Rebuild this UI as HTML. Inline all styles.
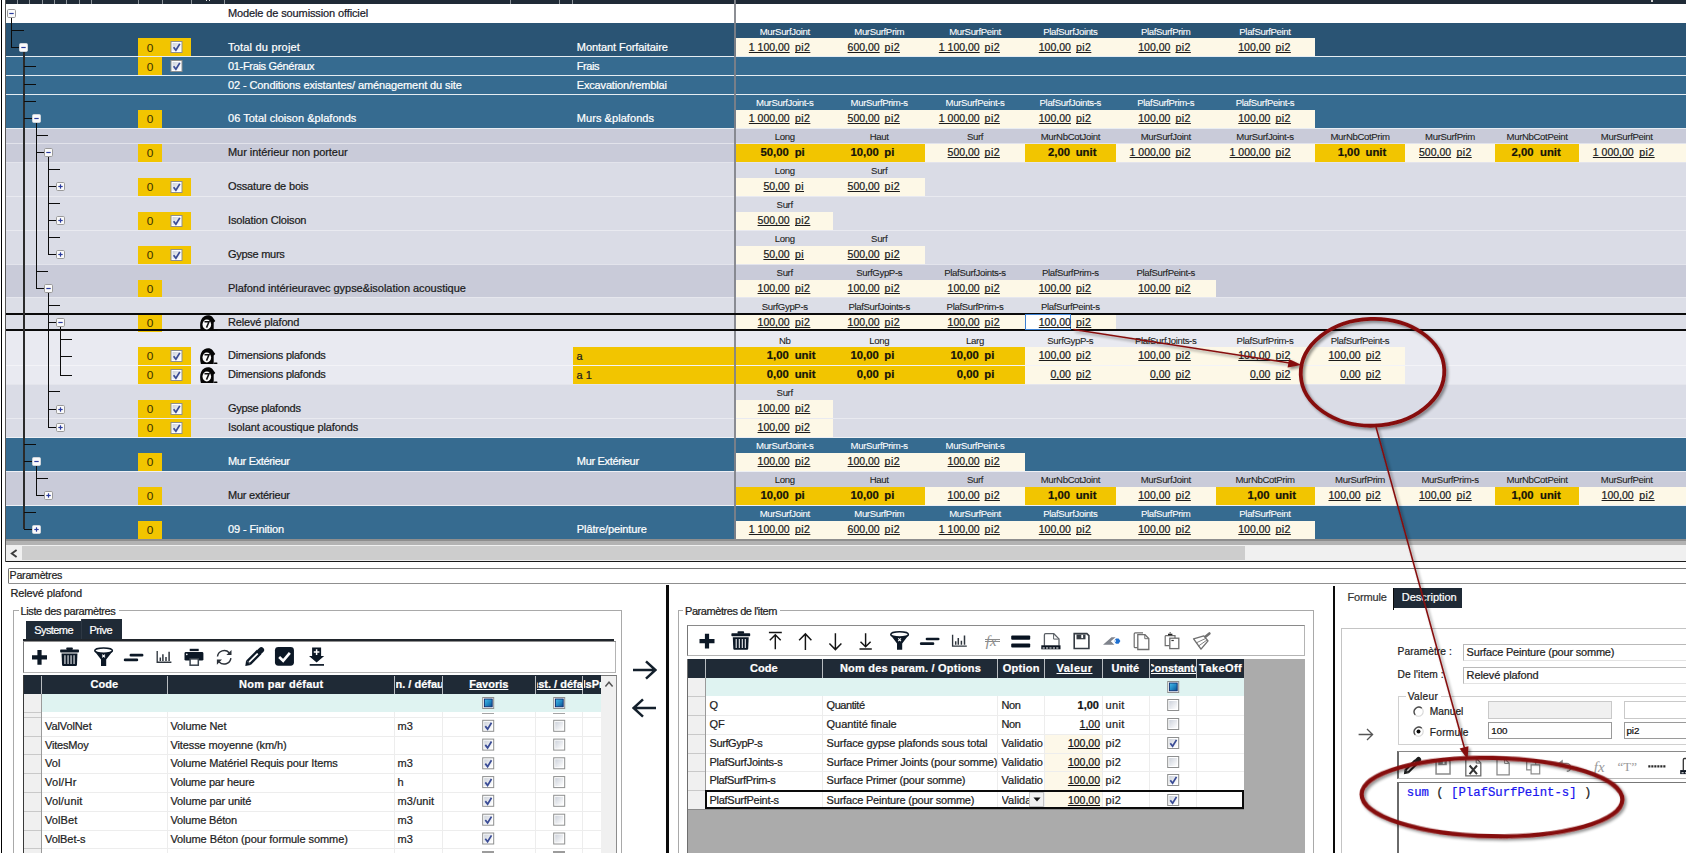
<!DOCTYPE html>
<html lang="fr"><head><meta charset="utf-8"><title>Paramètres</title>
<style>
html,body{margin:0;padding:0;background:#fff;}
body{width:1686px;height:853px;position:relative;overflow:hidden;font-family:"Liberation Sans",sans-serif;}
#root{position:absolute;left:0;top:0;width:1686px;height:853px;overflow:hidden;}
#root div,#root span,#root svg{position:absolute;}
.t{white-space:pre;line-height:1;text-decoration-skip-ink:none;-webkit-text-stroke:0.22px;}
</style></head>
<body><div id="root">
<div style="left:0px;top:0px;width:1686px;height:853px;background:#ffffff;"></div>
<div style="left:1px;top:0px;width:1.3px;height:853px;background:#000;"></div>
<div style="left:5.3px;top:0px;width:1680.7px;height:4px;background:#1f2a36;"></div>
<div style="left:17px;top:0px;width:1.2px;height:3.6px;background:#8d949b;"></div>
<div style="left:29.2px;top:0px;width:1.2px;height:3.6px;background:#8d949b;"></div>
<div style="left:42px;top:0px;width:1.2px;height:3.6px;background:#8d949b;"></div>
<div style="left:54px;top:0px;width:1.2px;height:3.6px;background:#8d949b;"></div>
<div style="left:66.3px;top:0px;width:1.2px;height:3.6px;background:#8d949b;"></div>
<div style="left:78.6px;top:0px;width:1.2px;height:3.6px;background:#8d949b;"></div>
<div style="left:90.7px;top:0px;width:1.2px;height:3.6px;background:#8d949b;"></div>
<div style="left:137.6px;top:0px;width:1.2px;height:3.6px;background:#8d949b;"></div>
<div style="left:161.6px;top:0px;width:1.2px;height:3.6px;background:#8d949b;"></div>
<div style="left:190.5px;top:0px;width:1.2px;height:3.6px;background:#8d949b;"></div>
<div style="left:224.2px;top:0px;width:1.2px;height:3.6px;background:#8d949b;"></div>
<div style="left:509.5px;top:0px;width:1.2px;height:3.6px;background:#8d949b;"></div>
<div style="left:559px;top:0px;width:1.2px;height:3.6px;background:#8d949b;"></div>
<div style="left:572px;top:0px;width:1.2px;height:3.6px;background:#8d949b;"></div>
<div style="left:733.6px;top:0px;width:1.2px;height:3.6px;background:#8d949b;"></div>
<div style="left:205.5px;top:0px;width:1.2px;height:1.2px;background:#e8e8e8;"></div>
<div style="left:208.5px;top:0px;width:1.2px;height:1.2px;background:#e8e8e8;"></div>
<div style="left:1651px;top:0px;width:1.5px;height:1.5px;background:#d0d0d0;"></div>
<div style="left:5.3px;top:4px;width:1680.7px;height:19px;background:#ffffff;"></div>
<div style="left:5.3px;top:23px;width:1680.7px;height:34px;background:#2a5474;"></div>
<div style="left:5.3px;top:56px;width:1680.7px;height:1px;background:#e6edf2;"></div>
<div style="left:5.3px;top:57px;width:1680.7px;height:19px;background:#366b90;"></div>
<div style="left:5.3px;top:75px;width:1680.7px;height:1px;background:#e6edf2;"></div>
<div style="left:5.3px;top:76px;width:1680.7px;height:19px;background:#366b90;"></div>
<div style="left:5.3px;top:94px;width:1680.7px;height:1px;background:#e6edf2;"></div>
<div style="left:5.3px;top:95px;width:1680.7px;height:34px;background:#366b90;"></div>
<div style="left:5.3px;top:128px;width:1680.7px;height:1px;background:#e9edf2;"></div>
<div style="left:5.3px;top:129px;width:1680.7px;height:34px;background:#c9cbd9;"></div>
<div style="left:5.3px;top:162px;width:1680.7px;height:1px;background:#e3e4ec;"></div>
<div style="left:5.3px;top:163px;width:1680.7px;height:34px;background:#dadce6;"></div>
<div style="left:5.3px;top:196px;width:1680.7px;height:1px;background:#e9eaf0;"></div>
<div style="left:5.3px;top:197px;width:1680.7px;height:34px;background:#dadce6;"></div>
<div style="left:5.3px;top:230px;width:1680.7px;height:1px;background:#e9eaf0;"></div>
<div style="left:5.3px;top:231px;width:1680.7px;height:34px;background:#dadce6;"></div>
<div style="left:5.3px;top:264px;width:1680.7px;height:1px;background:#e3e4ec;"></div>
<div style="left:5.3px;top:265px;width:1680.7px;height:32px;background:#c9cbd9;"></div>
<div style="left:5.3px;top:297px;width:1680.7px;height:34px;background:#dcdee7;"></div>
<div style="left:5.3px;top:331px;width:1680.7px;height:35px;background:#e9eaf1;"></div>
<div style="left:5.3px;top:365px;width:1680.7px;height:1px;background:#f3f3f7;"></div>
<div style="left:5.3px;top:366px;width:1680.7px;height:19px;background:#e9eaf1;"></div>
<div style="left:5.3px;top:384px;width:1680.7px;height:1px;background:#e4e5ec;"></div>
<div style="left:5.3px;top:385px;width:1680.7px;height:34px;background:#dadce6;"></div>
<div style="left:5.3px;top:418px;width:1680.7px;height:1px;background:#e9eaf0;"></div>
<div style="left:5.3px;top:419px;width:1680.7px;height:19px;background:#dadce6;"></div>
<div style="left:5.3px;top:437px;width:1680.7px;height:1px;background:#eef0f5;"></div>
<div style="left:5.3px;top:438px;width:1680.7px;height:34px;background:#366b90;"></div>
<div style="left:5.3px;top:471px;width:1680.7px;height:1px;background:#eef0f5;"></div>
<div style="left:5.3px;top:472px;width:1680.7px;height:34px;background:#c9cbd9;"></div>
<div style="left:5.3px;top:505px;width:1680.7px;height:1px;background:#eef0f5;"></div>
<div style="left:5.3px;top:506px;width:1680.7px;height:32.6px;background:#366b90;"></div>
<div style="left:5.3px;top:143px;width:1680.7px;height:1px;background:#e2e3eb;"></div>
<div style="left:5.3px;top:297px;width:1680.7px;height:1px;background:#e6e7ee;"></div>
<div style="left:735.8px;top:38px;width:97.4px;height:18px;background:#fdf8e7;"></div>
<span class="t" style="top:27px;font-size:9.6px;color:#ffffff;left:784.7px;transform:translateX(-50%);letter-spacing:-0.36px;-webkit-text-stroke:0.08px;">MurSurfJoint</span>
<span class="t" style="top:42px;font-size:10.5px;color:#1b1b1b;right:896.3px;text-decoration:underline;">1 100,00</span>
<span class="t" style="top:42px;font-size:10.6px;color:#1b1b1b;left:795px;text-decoration:underline;letter-spacing:0.4px;">pi2</span>
<div style="left:833.2px;top:38px;width:91.8px;height:18px;background:#fdf8e7;"></div>
<span class="t" style="top:27px;font-size:9.6px;color:#ffffff;left:879.2px;transform:translateX(-50%);letter-spacing:-0.36px;-webkit-text-stroke:0.08px;">MurSurfPrim</span>
<span class="t" style="top:42px;font-size:10.5px;color:#1b1b1b;right:806.3px;text-decoration:underline;">600,00</span>
<span class="t" style="top:42px;font-size:10.6px;color:#1b1b1b;left:884.6px;text-decoration:underline;letter-spacing:0.4px;">pi2</span>
<div style="left:925px;top:38px;width:100px;height:18px;background:#fdf8e7;"></div>
<span class="t" style="top:27px;font-size:9.6px;color:#ffffff;left:975px;transform:translateX(-50%);letter-spacing:-0.36px;-webkit-text-stroke:0.08px;">MurSurfPeint</span>
<span class="t" style="top:42px;font-size:10.5px;color:#1b1b1b;right:706.3px;text-decoration:underline;">1 100,00</span>
<span class="t" style="top:42px;font-size:10.6px;color:#1b1b1b;left:984.6px;text-decoration:underline;letter-spacing:0.4px;">pi2</span>
<div style="left:1025px;top:38px;width:91.3px;height:18px;background:#fdf8e7;"></div>
<span class="t" style="top:27px;font-size:9.6px;color:#ffffff;left:1070.3px;transform:translateX(-50%);letter-spacing:-0.36px;-webkit-text-stroke:0.08px;">PlafSurfJoints</span>
<span class="t" style="top:42px;font-size:10.5px;color:#1b1b1b;right:615.1px;text-decoration:underline;">100,00</span>
<span class="t" style="top:42px;font-size:10.6px;color:#1b1b1b;left:1076px;text-decoration:underline;letter-spacing:0.4px;">pi2</span>
<div style="left:1116.3px;top:38px;width:99.3px;height:18px;background:#fdf8e7;"></div>
<span class="t" style="top:27px;font-size:9.6px;color:#ffffff;left:1165.7px;transform:translateX(-50%);letter-spacing:-0.36px;-webkit-text-stroke:0.08px;">PlafSurfPrim</span>
<span class="t" style="top:42px;font-size:10.5px;color:#1b1b1b;right:515.6px;text-decoration:underline;">100,00</span>
<span class="t" style="top:42px;font-size:10.6px;color:#1b1b1b;left:1175.5px;text-decoration:underline;letter-spacing:0.4px;">pi2</span>
<div style="left:1215.6px;top:38px;width:99.4px;height:18px;background:#fdf8e7;"></div>
<span class="t" style="top:27px;font-size:9.6px;color:#ffffff;left:1265px;transform:translateX(-50%);letter-spacing:-0.36px;-webkit-text-stroke:0.08px;">PlafSurfPeint</span>
<span class="t" style="top:42px;font-size:10.5px;color:#1b1b1b;right:415.6px;text-decoration:underline;">100,00</span>
<span class="t" style="top:42px;font-size:10.6px;color:#1b1b1b;left:1275.5px;text-decoration:underline;letter-spacing:0.4px;">pi2</span>
<div style="left:735.8px;top:110px;width:97.4px;height:18px;background:#fdf8e7;"></div>
<span class="t" style="top:98px;font-size:9.6px;color:#ffffff;left:784.7px;transform:translateX(-50%);letter-spacing:-0.36px;-webkit-text-stroke:0.08px;">MurSurfJoint-s</span>
<span class="t" style="top:113px;font-size:10.5px;color:#1b1b1b;right:896.3px;text-decoration:underline;">1 000,00</span>
<span class="t" style="top:113px;font-size:10.6px;color:#1b1b1b;left:795px;text-decoration:underline;letter-spacing:0.4px;">pi2</span>
<div style="left:833.2px;top:110px;width:91.8px;height:18px;background:#fdf8e7;"></div>
<span class="t" style="top:98px;font-size:9.6px;color:#ffffff;left:879.2px;transform:translateX(-50%);letter-spacing:-0.36px;-webkit-text-stroke:0.08px;">MurSurfPrim-s</span>
<span class="t" style="top:113px;font-size:10.5px;color:#1b1b1b;right:806.3px;text-decoration:underline;">500,00</span>
<span class="t" style="top:113px;font-size:10.6px;color:#1b1b1b;left:884.6px;text-decoration:underline;letter-spacing:0.4px;">pi2</span>
<div style="left:925px;top:110px;width:100px;height:18px;background:#fdf8e7;"></div>
<span class="t" style="top:98px;font-size:9.6px;color:#ffffff;left:975px;transform:translateX(-50%);letter-spacing:-0.36px;-webkit-text-stroke:0.08px;">MurSurfPeint-s</span>
<span class="t" style="top:113px;font-size:10.5px;color:#1b1b1b;right:706.3px;text-decoration:underline;">1 000,00</span>
<span class="t" style="top:113px;font-size:10.6px;color:#1b1b1b;left:984.6px;text-decoration:underline;letter-spacing:0.4px;">pi2</span>
<div style="left:1025px;top:110px;width:91.3px;height:18px;background:#fdf8e7;"></div>
<span class="t" style="top:98px;font-size:9.6px;color:#ffffff;left:1070.3px;transform:translateX(-50%);letter-spacing:-0.36px;-webkit-text-stroke:0.08px;">PlafSurfJoints-s</span>
<span class="t" style="top:113px;font-size:10.5px;color:#1b1b1b;right:615.1px;text-decoration:underline;">100,00</span>
<span class="t" style="top:113px;font-size:10.6px;color:#1b1b1b;left:1076px;text-decoration:underline;letter-spacing:0.4px;">pi2</span>
<div style="left:1116.3px;top:110px;width:99.3px;height:18px;background:#fdf8e7;"></div>
<span class="t" style="top:98px;font-size:9.6px;color:#ffffff;left:1165.7px;transform:translateX(-50%);letter-spacing:-0.36px;-webkit-text-stroke:0.08px;">PlafSurfPrim-s</span>
<span class="t" style="top:113px;font-size:10.5px;color:#1b1b1b;right:515.6px;text-decoration:underline;">100,00</span>
<span class="t" style="top:113px;font-size:10.6px;color:#1b1b1b;left:1175.5px;text-decoration:underline;letter-spacing:0.4px;">pi2</span>
<div style="left:1215.6px;top:110px;width:99.4px;height:18px;background:#fdf8e7;"></div>
<span class="t" style="top:98px;font-size:9.6px;color:#ffffff;left:1265px;transform:translateX(-50%);letter-spacing:-0.36px;-webkit-text-stroke:0.08px;">PlafSurfPeint-s</span>
<span class="t" style="top:113px;font-size:10.5px;color:#1b1b1b;right:415.6px;text-decoration:underline;">100,00</span>
<span class="t" style="top:113px;font-size:10.6px;color:#1b1b1b;left:1275.5px;text-decoration:underline;letter-spacing:0.4px;">pi2</span>
<div style="left:735.8px;top:144px;width:97.4px;height:18px;background:#f2c500;"></div>
<span class="t" style="top:132px;font-size:9.6px;color:#222;left:784.7px;transform:translateX(-50%);letter-spacing:-0.36px;-webkit-text-stroke:0.08px;">Long</span>
<span class="t" style="top:147px;font-size:11.3px;color:#15130a;right:897.2px;font-weight:bold;">50,00</span>
<span class="t" style="top:147px;font-size:11.3px;color:#15130a;left:794.7px;font-weight:bold;">pi</span>
<div style="left:833.2px;top:144px;width:91.8px;height:18px;background:#f2c500;"></div>
<span class="t" style="top:132px;font-size:9.6px;color:#222;left:879.2px;transform:translateX(-50%);letter-spacing:-0.36px;-webkit-text-stroke:0.08px;">Haut</span>
<span class="t" style="top:147px;font-size:11.3px;color:#15130a;right:807.2px;font-weight:bold;">10,00</span>
<span class="t" style="top:147px;font-size:11.3px;color:#15130a;left:884.3px;font-weight:bold;">pi</span>
<div style="left:925px;top:144px;width:100px;height:18px;background:#fdf8e7;"></div>
<span class="t" style="top:132px;font-size:9.6px;color:#222;left:975px;transform:translateX(-50%);letter-spacing:-0.36px;-webkit-text-stroke:0.08px;">Surf</span>
<span class="t" style="top:147px;font-size:10.5px;color:#1b1b1b;right:706.3px;text-decoration:underline;">500,00</span>
<span class="t" style="top:147px;font-size:10.6px;color:#1b1b1b;left:984.6px;text-decoration:underline;letter-spacing:0.4px;">pi2</span>
<div style="left:1025px;top:144px;width:91.3px;height:18px;background:#f2c500;"></div>
<span class="t" style="top:132px;font-size:9.6px;color:#222;left:1070.3px;transform:translateX(-50%);letter-spacing:-0.36px;-webkit-text-stroke:0.08px;">MurNbCotJoint</span>
<span class="t" style="top:147px;font-size:11.3px;color:#15130a;right:616px;font-weight:bold;">2,00</span>
<span class="t" style="top:147px;font-size:11.3px;color:#15130a;left:1075.7px;font-weight:bold;">unit</span>
<div style="left:1116.3px;top:144px;width:99.3px;height:18px;background:#fdf8e7;"></div>
<span class="t" style="top:132px;font-size:9.6px;color:#222;left:1165.7px;transform:translateX(-50%);letter-spacing:-0.36px;-webkit-text-stroke:0.08px;">MurSurfJoint</span>
<span class="t" style="top:147px;font-size:10.5px;color:#1b1b1b;right:515.6px;text-decoration:underline;">1 000,00</span>
<span class="t" style="top:147px;font-size:10.6px;color:#1b1b1b;left:1175.5px;text-decoration:underline;letter-spacing:0.4px;">pi2</span>
<div style="left:1215.6px;top:144px;width:99.4px;height:18px;background:#fdf8e7;"></div>
<span class="t" style="top:132px;font-size:9.6px;color:#222;left:1265px;transform:translateX(-50%);letter-spacing:-0.36px;-webkit-text-stroke:0.08px;">MurSurfJoint-s</span>
<span class="t" style="top:147px;font-size:10.5px;color:#1b1b1b;right:415.6px;text-decoration:underline;">1 000,00</span>
<span class="t" style="top:147px;font-size:10.6px;color:#1b1b1b;left:1275.5px;text-decoration:underline;letter-spacing:0.4px;">pi2</span>
<div style="left:1315px;top:144px;width:90.2px;height:18px;background:#f2c500;"></div>
<span class="t" style="top:132px;font-size:9.6px;color:#222;left:1360px;transform:translateX(-50%);letter-spacing:-0.36px;-webkit-text-stroke:0.08px;">MurNbCotPrim</span>
<span class="t" style="top:147px;font-size:11.3px;color:#15130a;right:326.3px;font-weight:bold;">1,00</span>
<span class="t" style="top:147px;font-size:11.3px;color:#15130a;left:1365.5px;font-weight:bold;">unit</span>
<div style="left:1405.2px;top:144px;width:89.8px;height:18px;background:#fdf8e7;"></div>
<span class="t" style="top:132px;font-size:9.6px;color:#222;left:1450px;transform:translateX(-50%);letter-spacing:-0.36px;-webkit-text-stroke:0.08px;">MurSurfPrim</span>
<span class="t" style="top:147px;font-size:10.5px;color:#1b1b1b;right:234.9px;text-decoration:underline;">500,00</span>
<span class="t" style="top:147px;font-size:10.6px;color:#1b1b1b;left:1456.4px;text-decoration:underline;letter-spacing:0.4px;">pi2</span>
<div style="left:1495px;top:144px;width:84.4px;height:18px;background:#f2c500;"></div>
<span class="t" style="top:132px;font-size:9.6px;color:#222;left:1537px;transform:translateX(-50%);letter-spacing:-0.36px;-webkit-text-stroke:0.08px;">MurNbCotPeint</span>
<span class="t" style="top:147px;font-size:11.3px;color:#15130a;right:152.5px;font-weight:bold;">2,00</span>
<span class="t" style="top:147px;font-size:11.3px;color:#15130a;left:1540px;font-weight:bold;">unit</span>
<div style="left:1579.4px;top:144px;width:106.6px;height:18px;background:#fdf8e7;"></div>
<span class="t" style="top:132px;font-size:9.6px;color:#222;left:1626.7px;transform:translateX(-50%);letter-spacing:-0.36px;-webkit-text-stroke:0.08px;">MurSurfPeint</span>
<span class="t" style="top:147px;font-size:10.5px;color:#1b1b1b;right:52.3px;text-decoration:underline;">1 000,00</span>
<span class="t" style="top:147px;font-size:10.6px;color:#1b1b1b;left:1639.3px;text-decoration:underline;letter-spacing:0.4px;">pi2</span>
<div style="left:735.8px;top:178px;width:97.4px;height:18px;background:#fdf8e7;"></div>
<span class="t" style="top:166px;font-size:9.6px;color:#222;left:784.7px;transform:translateX(-50%);letter-spacing:-0.36px;-webkit-text-stroke:0.08px;">Long</span>
<span class="t" style="top:181px;font-size:10.5px;color:#1b1b1b;right:896.3px;text-decoration:underline;">50,00</span>
<span class="t" style="top:181px;font-size:10.6px;color:#1b1b1b;left:795px;text-decoration:underline;letter-spacing:0.4px;">pi</span>
<div style="left:833.2px;top:178px;width:91.8px;height:18px;background:#fdf8e7;"></div>
<span class="t" style="top:166px;font-size:9.6px;color:#222;left:879.2px;transform:translateX(-50%);letter-spacing:-0.36px;-webkit-text-stroke:0.08px;">Surf</span>
<span class="t" style="top:181px;font-size:10.5px;color:#1b1b1b;right:806.3px;text-decoration:underline;">500,00</span>
<span class="t" style="top:181px;font-size:10.6px;color:#1b1b1b;left:884.6px;text-decoration:underline;letter-spacing:0.4px;">pi2</span>
<div style="left:735.8px;top:212px;width:97.4px;height:18px;background:#fdf8e7;"></div>
<span class="t" style="top:200px;font-size:9.6px;color:#222;left:784.7px;transform:translateX(-50%);letter-spacing:-0.36px;-webkit-text-stroke:0.08px;">Surf</span>
<span class="t" style="top:215px;font-size:10.5px;color:#1b1b1b;right:896.3px;text-decoration:underline;">500,00</span>
<span class="t" style="top:215px;font-size:10.6px;color:#1b1b1b;left:795px;text-decoration:underline;letter-spacing:0.4px;">pi2</span>
<div style="left:735.8px;top:246px;width:97.4px;height:18px;background:#fdf8e7;"></div>
<span class="t" style="top:234px;font-size:9.6px;color:#222;left:784.7px;transform:translateX(-50%);letter-spacing:-0.36px;-webkit-text-stroke:0.08px;">Long</span>
<span class="t" style="top:249px;font-size:10.5px;color:#1b1b1b;right:896.3px;text-decoration:underline;">50,00</span>
<span class="t" style="top:249px;font-size:10.6px;color:#1b1b1b;left:795px;text-decoration:underline;letter-spacing:0.4px;">pi</span>
<div style="left:833.2px;top:246px;width:91.8px;height:18px;background:#fdf8e7;"></div>
<span class="t" style="top:234px;font-size:9.6px;color:#222;left:879.2px;transform:translateX(-50%);letter-spacing:-0.36px;-webkit-text-stroke:0.08px;">Surf</span>
<span class="t" style="top:249px;font-size:10.5px;color:#1b1b1b;right:806.3px;text-decoration:underline;">500,00</span>
<span class="t" style="top:249px;font-size:10.6px;color:#1b1b1b;left:884.6px;text-decoration:underline;letter-spacing:0.4px;">pi2</span>
<div style="left:735.8px;top:280px;width:97.4px;height:17px;background:#fdf8e7;"></div>
<span class="t" style="top:268px;font-size:9.6px;color:#222;left:784.7px;transform:translateX(-50%);letter-spacing:-0.36px;-webkit-text-stroke:0.08px;">Surf</span>
<span class="t" style="top:283px;font-size:10.5px;color:#1b1b1b;right:896.3px;text-decoration:underline;">100,00</span>
<span class="t" style="top:283px;font-size:10.6px;color:#1b1b1b;left:795px;text-decoration:underline;letter-spacing:0.4px;">pi2</span>
<div style="left:833.2px;top:280px;width:91.8px;height:17px;background:#fdf8e7;"></div>
<span class="t" style="top:268px;font-size:9.6px;color:#222;left:879.2px;transform:translateX(-50%);letter-spacing:-0.36px;-webkit-text-stroke:0.08px;">SurfGypP-s</span>
<span class="t" style="top:283px;font-size:10.5px;color:#1b1b1b;right:806.3px;text-decoration:underline;">100,00</span>
<span class="t" style="top:283px;font-size:10.6px;color:#1b1b1b;left:884.6px;text-decoration:underline;letter-spacing:0.4px;">pi2</span>
<div style="left:925px;top:280px;width:100px;height:17px;background:#fdf8e7;"></div>
<span class="t" style="top:268px;font-size:9.6px;color:#222;left:975px;transform:translateX(-50%);letter-spacing:-0.36px;-webkit-text-stroke:0.08px;">PlafSurfJoints-s</span>
<span class="t" style="top:283px;font-size:10.5px;color:#1b1b1b;right:706.3px;text-decoration:underline;">100,00</span>
<span class="t" style="top:283px;font-size:10.6px;color:#1b1b1b;left:984.6px;text-decoration:underline;letter-spacing:0.4px;">pi2</span>
<div style="left:1025px;top:280px;width:91.3px;height:17px;background:#fdf8e7;"></div>
<span class="t" style="top:268px;font-size:9.6px;color:#222;left:1070.3px;transform:translateX(-50%);letter-spacing:-0.36px;-webkit-text-stroke:0.08px;">PlafSurfPrim-s</span>
<span class="t" style="top:283px;font-size:10.5px;color:#1b1b1b;right:615.1px;text-decoration:underline;">100,00</span>
<span class="t" style="top:283px;font-size:10.6px;color:#1b1b1b;left:1076px;text-decoration:underline;letter-spacing:0.4px;">pi2</span>
<div style="left:1116.3px;top:280px;width:99.3px;height:17px;background:#fdf8e7;"></div>
<span class="t" style="top:268px;font-size:9.6px;color:#222;left:1165.7px;transform:translateX(-50%);letter-spacing:-0.36px;-webkit-text-stroke:0.08px;">PlafSurfPeint-s</span>
<span class="t" style="top:283px;font-size:10.5px;color:#1b1b1b;right:515.6px;text-decoration:underline;">100,00</span>
<span class="t" style="top:283px;font-size:10.6px;color:#1b1b1b;left:1175.5px;text-decoration:underline;letter-spacing:0.4px;">pi2</span>
<div style="left:735.8px;top:315px;width:97.4px;height:15px;background:#fdf8e7;"></div>
<span class="t" style="top:302px;font-size:9.6px;color:#222;left:784.7px;transform:translateX(-50%);letter-spacing:-0.36px;-webkit-text-stroke:0.08px;">SurfGypP-s</span>
<span class="t" style="top:317px;font-size:10.5px;color:#1b1b1b;right:896.3px;text-decoration:underline;">100,00</span>
<span class="t" style="top:317px;font-size:10.6px;color:#1b1b1b;left:795px;text-decoration:underline;letter-spacing:0.4px;">pi2</span>
<div style="left:833.2px;top:315px;width:91.8px;height:15px;background:#fdf8e7;"></div>
<span class="t" style="top:302px;font-size:9.6px;color:#222;left:879.2px;transform:translateX(-50%);letter-spacing:-0.36px;-webkit-text-stroke:0.08px;">PlafSurfJoints-s</span>
<span class="t" style="top:317px;font-size:10.5px;color:#1b1b1b;right:806.3px;text-decoration:underline;">100,00</span>
<span class="t" style="top:317px;font-size:10.6px;color:#1b1b1b;left:884.6px;text-decoration:underline;letter-spacing:0.4px;">pi2</span>
<div style="left:925px;top:315px;width:100px;height:15px;background:#fdf8e7;"></div>
<span class="t" style="top:302px;font-size:9.6px;color:#222;left:975px;transform:translateX(-50%);letter-spacing:-0.36px;-webkit-text-stroke:0.08px;">PlafSurfPrim-s</span>
<span class="t" style="top:317px;font-size:10.5px;color:#1b1b1b;right:706.3px;text-decoration:underline;">100,00</span>
<span class="t" style="top:317px;font-size:10.6px;color:#1b1b1b;left:984.6px;text-decoration:underline;letter-spacing:0.4px;">pi2</span>
<div style="left:1025px;top:315px;width:91.3px;height:15px;background:#fdf8e7;"></div>
<span class="t" style="top:302px;font-size:9.6px;color:#222;left:1070.3px;transform:translateX(-50%);letter-spacing:-0.36px;-webkit-text-stroke:0.08px;">PlafSurfPeint-s</span>
<span class="t" style="top:317px;font-size:10.5px;color:#1b1b1b;right:615.1px;text-decoration:underline;">100,00</span>
<span class="t" style="top:317px;font-size:10.6px;color:#1b1b1b;left:1076px;text-decoration:underline;letter-spacing:0.4px;">pi2</span>
<div style="left:573.4px;top:347.2px;width:162.6px;height:17.8px;background:#f2c500;"></div>
<div style="left:573.4px;top:366.2px;width:162.6px;height:17.8px;background:#f2c500;"></div>
<div style="left:735.8px;top:347.2px;width:97.4px;height:17.8px;background:#f2c500;"></div>
<span class="t" style="top:336px;font-size:9.6px;color:#222;left:784.7px;transform:translateX(-50%);letter-spacing:-0.36px;-webkit-text-stroke:0.08px;">Nb</span>
<span class="t" style="top:350px;font-size:11.3px;color:#15130a;right:897.2px;font-weight:bold;">1,00</span>
<span class="t" style="top:350px;font-size:11.3px;color:#15130a;left:794.7px;font-weight:bold;">unit</span>
<div style="left:833.2px;top:347.2px;width:91.8px;height:17.8px;background:#f2c500;"></div>
<span class="t" style="top:336px;font-size:9.6px;color:#222;left:879.2px;transform:translateX(-50%);letter-spacing:-0.36px;-webkit-text-stroke:0.08px;">Long</span>
<span class="t" style="top:350px;font-size:11.3px;color:#15130a;right:807.2px;font-weight:bold;">10,00</span>
<span class="t" style="top:350px;font-size:11.3px;color:#15130a;left:884.3px;font-weight:bold;">pi</span>
<div style="left:925px;top:347.2px;width:100px;height:17.8px;background:#f2c500;"></div>
<span class="t" style="top:336px;font-size:9.6px;color:#222;left:975px;transform:translateX(-50%);letter-spacing:-0.36px;-webkit-text-stroke:0.08px;">Larg</span>
<span class="t" style="top:350px;font-size:11.3px;color:#15130a;right:707.2px;font-weight:bold;">10,00</span>
<span class="t" style="top:350px;font-size:11.3px;color:#15130a;left:984.3px;font-weight:bold;">pi</span>
<div style="left:1025px;top:347.2px;width:91.3px;height:17.8px;background:#fdf8e7;"></div>
<span class="t" style="top:336px;font-size:9.6px;color:#222;left:1070.3px;transform:translateX(-50%);letter-spacing:-0.36px;-webkit-text-stroke:0.08px;">SurfGypP-s</span>
<span class="t" style="top:350px;font-size:10.5px;color:#1b1b1b;right:615.1px;text-decoration:underline;">100,00</span>
<span class="t" style="top:350px;font-size:10.6px;color:#1b1b1b;left:1076px;text-decoration:underline;letter-spacing:0.4px;">pi2</span>
<div style="left:1116.3px;top:347.2px;width:99.3px;height:17.8px;background:#fdf8e7;"></div>
<span class="t" style="top:336px;font-size:9.6px;color:#222;left:1165.7px;transform:translateX(-50%);letter-spacing:-0.36px;-webkit-text-stroke:0.08px;">PlafSurfJoints-s</span>
<span class="t" style="top:350px;font-size:10.5px;color:#1b1b1b;right:515.6px;text-decoration:underline;">100,00</span>
<span class="t" style="top:350px;font-size:10.6px;color:#1b1b1b;left:1175.5px;text-decoration:underline;letter-spacing:0.4px;">pi2</span>
<div style="left:1215.6px;top:347.2px;width:99.4px;height:17.8px;background:#fdf8e7;"></div>
<span class="t" style="top:336px;font-size:9.6px;color:#222;left:1265px;transform:translateX(-50%);letter-spacing:-0.36px;-webkit-text-stroke:0.08px;">PlafSurfPrim-s</span>
<span class="t" style="top:350px;font-size:10.5px;color:#1b1b1b;right:415.6px;text-decoration:underline;">100,00</span>
<span class="t" style="top:350px;font-size:10.6px;color:#1b1b1b;left:1275.5px;text-decoration:underline;letter-spacing:0.4px;">pi2</span>
<div style="left:1315px;top:347.2px;width:90.2px;height:17.8px;background:#fdf8e7;"></div>
<span class="t" style="top:336px;font-size:9.6px;color:#222;left:1360px;transform:translateX(-50%);letter-spacing:-0.36px;-webkit-text-stroke:0.08px;">PlafSurfPeint-s</span>
<span class="t" style="top:350px;font-size:10.5px;color:#1b1b1b;right:325.4px;text-decoration:underline;">100,00</span>
<span class="t" style="top:350px;font-size:10.6px;color:#1b1b1b;left:1365.8px;text-decoration:underline;letter-spacing:0.4px;">pi2</span>
<div style="left:735.8px;top:366.2px;width:97.4px;height:17.8px;background:#f2c500;"></div>
<span class="t" style="top:369px;font-size:11.3px;color:#15130a;right:897.2px;font-weight:bold;">0,00</span>
<span class="t" style="top:369px;font-size:11.3px;color:#15130a;left:794.7px;font-weight:bold;">unit</span>
<div style="left:833.2px;top:366.2px;width:91.8px;height:17.8px;background:#f2c500;"></div>
<span class="t" style="top:369px;font-size:11.3px;color:#15130a;right:807.2px;font-weight:bold;">0,00</span>
<span class="t" style="top:369px;font-size:11.3px;color:#15130a;left:884.3px;font-weight:bold;">pi</span>
<div style="left:925px;top:366.2px;width:100px;height:17.8px;background:#f2c500;"></div>
<span class="t" style="top:369px;font-size:11.3px;color:#15130a;right:707.2px;font-weight:bold;">0,00</span>
<span class="t" style="top:369px;font-size:11.3px;color:#15130a;left:984.3px;font-weight:bold;">pi</span>
<div style="left:1025px;top:366.2px;width:91.3px;height:17.8px;background:#fdf8e7;"></div>
<span class="t" style="top:369px;font-size:10.5px;color:#1b1b1b;right:615.1px;text-decoration:underline;">0,00</span>
<span class="t" style="top:369px;font-size:10.6px;color:#1b1b1b;left:1076px;text-decoration:underline;letter-spacing:0.4px;">pi2</span>
<div style="left:1116.3px;top:366.2px;width:99.3px;height:17.8px;background:#fdf8e7;"></div>
<span class="t" style="top:369px;font-size:10.5px;color:#1b1b1b;right:515.6px;text-decoration:underline;">0,00</span>
<span class="t" style="top:369px;font-size:10.6px;color:#1b1b1b;left:1175.5px;text-decoration:underline;letter-spacing:0.4px;">pi2</span>
<div style="left:1215.6px;top:366.2px;width:99.4px;height:17.8px;background:#fdf8e7;"></div>
<span class="t" style="top:369px;font-size:10.5px;color:#1b1b1b;right:415.6px;text-decoration:underline;">0,00</span>
<span class="t" style="top:369px;font-size:10.6px;color:#1b1b1b;left:1275.5px;text-decoration:underline;letter-spacing:0.4px;">pi2</span>
<div style="left:1315px;top:366.2px;width:90.2px;height:17.8px;background:#fdf8e7;"></div>
<span class="t" style="top:369px;font-size:10.5px;color:#1b1b1b;right:325.4px;text-decoration:underline;">0,00</span>
<span class="t" style="top:369px;font-size:10.6px;color:#1b1b1b;left:1365.8px;text-decoration:underline;letter-spacing:0.4px;">pi2</span>
<div style="left:735.8px;top:400.2px;width:97.4px;height:17.8px;background:#fdf8e7;"></div>
<span class="t" style="top:388px;font-size:9.6px;color:#222;left:784.7px;transform:translateX(-50%);letter-spacing:-0.36px;-webkit-text-stroke:0.08px;">Surf</span>
<span class="t" style="top:403px;font-size:10.5px;color:#1b1b1b;right:896.3px;text-decoration:underline;">100,00</span>
<span class="t" style="top:403px;font-size:10.6px;color:#1b1b1b;left:795px;text-decoration:underline;letter-spacing:0.4px;">pi2</span>
<div style="left:735.8px;top:419.3px;width:97.4px;height:17.7px;background:#fdf8e7;"></div>
<span class="t" style="top:422px;font-size:10.5px;color:#1b1b1b;right:896.3px;text-decoration:underline;">100,00</span>
<span class="t" style="top:422px;font-size:10.6px;color:#1b1b1b;left:795px;text-decoration:underline;letter-spacing:0.4px;">pi2</span>
<div style="left:735.8px;top:453px;width:97.4px;height:18px;background:#fdf8e7;"></div>
<span class="t" style="top:441px;font-size:9.6px;color:#ffffff;left:784.7px;transform:translateX(-50%);letter-spacing:-0.36px;-webkit-text-stroke:0.08px;">MurSurfJoint-s</span>
<span class="t" style="top:456px;font-size:10.5px;color:#1b1b1b;right:896.3px;text-decoration:underline;">100,00</span>
<span class="t" style="top:456px;font-size:10.6px;color:#1b1b1b;left:795px;text-decoration:underline;letter-spacing:0.4px;">pi2</span>
<div style="left:833.2px;top:453px;width:91.8px;height:18px;background:#fdf8e7;"></div>
<span class="t" style="top:441px;font-size:9.6px;color:#ffffff;left:879.2px;transform:translateX(-50%);letter-spacing:-0.36px;-webkit-text-stroke:0.08px;">MurSurfPrim-s</span>
<span class="t" style="top:456px;font-size:10.5px;color:#1b1b1b;right:806.3px;text-decoration:underline;">100,00</span>
<span class="t" style="top:456px;font-size:10.6px;color:#1b1b1b;left:884.6px;text-decoration:underline;letter-spacing:0.4px;">pi2</span>
<div style="left:925px;top:453px;width:100px;height:18px;background:#fdf8e7;"></div>
<span class="t" style="top:441px;font-size:9.6px;color:#ffffff;left:975px;transform:translateX(-50%);letter-spacing:-0.36px;-webkit-text-stroke:0.08px;">MurSurfPeint-s</span>
<span class="t" style="top:456px;font-size:10.5px;color:#1b1b1b;right:706.3px;text-decoration:underline;">100,00</span>
<span class="t" style="top:456px;font-size:10.6px;color:#1b1b1b;left:984.6px;text-decoration:underline;letter-spacing:0.4px;">pi2</span>
<div style="left:735.8px;top:487px;width:97.4px;height:18px;background:#f2c500;"></div>
<span class="t" style="top:475px;font-size:9.6px;color:#222;left:784.7px;transform:translateX(-50%);letter-spacing:-0.36px;-webkit-text-stroke:0.08px;">Long</span>
<span class="t" style="top:490px;font-size:11.3px;color:#15130a;right:897.2px;font-weight:bold;">10,00</span>
<span class="t" style="top:490px;font-size:11.3px;color:#15130a;left:794.7px;font-weight:bold;">pi</span>
<div style="left:833.2px;top:487px;width:91.8px;height:18px;background:#f2c500;"></div>
<span class="t" style="top:475px;font-size:9.6px;color:#222;left:879.2px;transform:translateX(-50%);letter-spacing:-0.36px;-webkit-text-stroke:0.08px;">Haut</span>
<span class="t" style="top:490px;font-size:11.3px;color:#15130a;right:807.2px;font-weight:bold;">10,00</span>
<span class="t" style="top:490px;font-size:11.3px;color:#15130a;left:884.3px;font-weight:bold;">pi</span>
<div style="left:925px;top:487px;width:100px;height:18px;background:#fdf8e7;"></div>
<span class="t" style="top:475px;font-size:9.6px;color:#222;left:975px;transform:translateX(-50%);letter-spacing:-0.36px;-webkit-text-stroke:0.08px;">Surf</span>
<span class="t" style="top:490px;font-size:10.5px;color:#1b1b1b;right:706.3px;text-decoration:underline;">100,00</span>
<span class="t" style="top:490px;font-size:10.6px;color:#1b1b1b;left:984.6px;text-decoration:underline;letter-spacing:0.4px;">pi2</span>
<div style="left:1025px;top:487px;width:91.3px;height:18px;background:#f2c500;"></div>
<span class="t" style="top:475px;font-size:9.6px;color:#222;left:1070.3px;transform:translateX(-50%);letter-spacing:-0.36px;-webkit-text-stroke:0.08px;">MurNbCotJoint</span>
<span class="t" style="top:490px;font-size:11.3px;color:#15130a;right:616px;font-weight:bold;">1,00</span>
<span class="t" style="top:490px;font-size:11.3px;color:#15130a;left:1075.7px;font-weight:bold;">unit</span>
<div style="left:1116.3px;top:487px;width:99.3px;height:18px;background:#fdf8e7;"></div>
<span class="t" style="top:475px;font-size:9.6px;color:#222;left:1165.7px;transform:translateX(-50%);letter-spacing:-0.36px;-webkit-text-stroke:0.08px;">MurSurfJoint</span>
<span class="t" style="top:490px;font-size:10.5px;color:#1b1b1b;right:515.6px;text-decoration:underline;">100,00</span>
<span class="t" style="top:490px;font-size:10.6px;color:#1b1b1b;left:1175.5px;text-decoration:underline;letter-spacing:0.4px;">pi2</span>
<div style="left:1215.6px;top:487px;width:99.4px;height:18px;background:#f2c500;"></div>
<span class="t" style="top:475px;font-size:9.6px;color:#222;left:1265px;transform:translateX(-50%);letter-spacing:-0.36px;-webkit-text-stroke:0.08px;">MurNbCotPrim</span>
<span class="t" style="top:490px;font-size:11.3px;color:#15130a;right:416.5px;font-weight:bold;">1,00</span>
<span class="t" style="top:490px;font-size:11.3px;color:#15130a;left:1275.2px;font-weight:bold;">unit</span>
<div style="left:1315px;top:487px;width:90.2px;height:18px;background:#fdf8e7;"></div>
<span class="t" style="top:475px;font-size:9.6px;color:#222;left:1360px;transform:translateX(-50%);letter-spacing:-0.36px;-webkit-text-stroke:0.08px;">MurSurfPrim</span>
<span class="t" style="top:490px;font-size:10.5px;color:#1b1b1b;right:325.4px;text-decoration:underline;">100,00</span>
<span class="t" style="top:490px;font-size:10.6px;color:#1b1b1b;left:1365.8px;text-decoration:underline;letter-spacing:0.4px;">pi2</span>
<div style="left:1405.2px;top:487px;width:89.8px;height:18px;background:#fdf8e7;"></div>
<span class="t" style="top:475px;font-size:9.6px;color:#222;left:1450px;transform:translateX(-50%);letter-spacing:-0.36px;-webkit-text-stroke:0.08px;">MurSurfPrim-s</span>
<span class="t" style="top:490px;font-size:10.5px;color:#1b1b1b;right:234.9px;text-decoration:underline;">100,00</span>
<span class="t" style="top:490px;font-size:10.6px;color:#1b1b1b;left:1456.4px;text-decoration:underline;letter-spacing:0.4px;">pi2</span>
<div style="left:1495px;top:487px;width:84.4px;height:18px;background:#f2c500;"></div>
<span class="t" style="top:475px;font-size:9.6px;color:#222;left:1537px;transform:translateX(-50%);letter-spacing:-0.36px;-webkit-text-stroke:0.08px;">MurNbCotPeint</span>
<span class="t" style="top:490px;font-size:11.3px;color:#15130a;right:152.5px;font-weight:bold;">1,00</span>
<span class="t" style="top:490px;font-size:11.3px;color:#15130a;left:1540px;font-weight:bold;">unit</span>
<div style="left:1579.4px;top:487px;width:106.6px;height:18px;background:#fdf8e7;"></div>
<span class="t" style="top:475px;font-size:9.6px;color:#222;left:1626.7px;transform:translateX(-50%);letter-spacing:-0.36px;-webkit-text-stroke:0.08px;">MurSurfPeint</span>
<span class="t" style="top:490px;font-size:10.5px;color:#1b1b1b;right:52.3px;text-decoration:underline;">100,00</span>
<span class="t" style="top:490px;font-size:10.6px;color:#1b1b1b;left:1639.3px;text-decoration:underline;letter-spacing:0.4px;">pi2</span>
<div style="left:735.8px;top:520.6px;width:97.4px;height:18px;background:#fdf8e7;"></div>
<span class="t" style="top:509px;font-size:9.6px;color:#ffffff;left:784.7px;transform:translateX(-50%);letter-spacing:-0.36px;-webkit-text-stroke:0.08px;">MurSurfJoint</span>
<span class="t" style="top:524px;font-size:10.5px;color:#1b1b1b;right:896.3px;text-decoration:underline;">1 100,00</span>
<span class="t" style="top:524px;font-size:10.6px;color:#1b1b1b;left:795px;text-decoration:underline;letter-spacing:0.4px;">pi2</span>
<div style="left:833.2px;top:520.6px;width:91.8px;height:18px;background:#fdf8e7;"></div>
<span class="t" style="top:509px;font-size:9.6px;color:#ffffff;left:879.2px;transform:translateX(-50%);letter-spacing:-0.36px;-webkit-text-stroke:0.08px;">MurSurfPrim</span>
<span class="t" style="top:524px;font-size:10.5px;color:#1b1b1b;right:806.3px;text-decoration:underline;">600,00</span>
<span class="t" style="top:524px;font-size:10.6px;color:#1b1b1b;left:884.6px;text-decoration:underline;letter-spacing:0.4px;">pi2</span>
<div style="left:925px;top:520.6px;width:100px;height:18px;background:#fdf8e7;"></div>
<span class="t" style="top:509px;font-size:9.6px;color:#ffffff;left:975px;transform:translateX(-50%);letter-spacing:-0.36px;-webkit-text-stroke:0.08px;">MurSurfPeint</span>
<span class="t" style="top:524px;font-size:10.5px;color:#1b1b1b;right:706.3px;text-decoration:underline;">1 100,00</span>
<span class="t" style="top:524px;font-size:10.6px;color:#1b1b1b;left:984.6px;text-decoration:underline;letter-spacing:0.4px;">pi2</span>
<div style="left:1025px;top:520.6px;width:91.3px;height:18px;background:#fdf8e7;"></div>
<span class="t" style="top:509px;font-size:9.6px;color:#ffffff;left:1070.3px;transform:translateX(-50%);letter-spacing:-0.36px;-webkit-text-stroke:0.08px;">PlafSurfJoints</span>
<span class="t" style="top:524px;font-size:10.5px;color:#1b1b1b;right:615.1px;text-decoration:underline;">100,00</span>
<span class="t" style="top:524px;font-size:10.6px;color:#1b1b1b;left:1076px;text-decoration:underline;letter-spacing:0.4px;">pi2</span>
<div style="left:1116.3px;top:520.6px;width:99.3px;height:18px;background:#fdf8e7;"></div>
<span class="t" style="top:509px;font-size:9.6px;color:#ffffff;left:1165.7px;transform:translateX(-50%);letter-spacing:-0.36px;-webkit-text-stroke:0.08px;">PlafSurfPrim</span>
<span class="t" style="top:524px;font-size:10.5px;color:#1b1b1b;right:515.6px;text-decoration:underline;">100,00</span>
<span class="t" style="top:524px;font-size:10.6px;color:#1b1b1b;left:1175.5px;text-decoration:underline;letter-spacing:0.4px;">pi2</span>
<div style="left:1215.6px;top:520.6px;width:99.4px;height:18px;background:#fdf8e7;"></div>
<span class="t" style="top:509px;font-size:9.6px;color:#ffffff;left:1265px;transform:translateX(-50%);letter-spacing:-0.36px;-webkit-text-stroke:0.08px;">PlafSurfPeint</span>
<span class="t" style="top:524px;font-size:10.5px;color:#1b1b1b;right:415.6px;text-decoration:underline;">100,00</span>
<span class="t" style="top:524px;font-size:10.6px;color:#1b1b1b;left:1275.5px;text-decoration:underline;letter-spacing:0.4px;">pi2</span>
<div style="left:734.3px;top:0px;width:1.5px;height:538.6px;background:rgba(128,130,136,0.9);"></div>
<div style="left:5.3px;top:313px;width:1680.7px;height:2px;background:#0a0a0a;"></div>
<div style="left:5.3px;top:329px;width:1680.7px;height:2px;background:#0a0a0a;"></div>
<div style="left:1025.4px;top:314.2px;width:45.8px;height:16px;background:#ffffff;border:1px solid #3c7fd0;box-sizing:border-box;"></div>
<span class="t" style="top:317px;font-size:10.5px;color:#1b1b1b;right:615.1px;text-decoration:underline;">100,00</span>
<div style="left:138px;top:38px;width:53px;height:18px;background:#f2c500;"></div>
<span class="t" style="top:42px;font-size:10.6px;color:#3a3000;left:150px;transform:translateX(-50%);transform:translate(-50%,0.6px) scaleX(1.12);-webkit-text-stroke:0;">0</span>
<div style="left:138px;top:57px;width:24px;height:18px;background:#f2c500;"></div>
<span class="t" style="top:61px;font-size:10.6px;color:#3a3000;left:150px;transform:translateX(-50%);transform:translate(-50%,0.6px) scaleX(1.12);-webkit-text-stroke:0;">0</span>
<div style="left:138px;top:110px;width:24px;height:18px;background:#f2c500;"></div>
<span class="t" style="top:113px;font-size:10.6px;color:#3a3000;left:150px;transform:translateX(-50%);transform:translate(-50%,0.6px) scaleX(1.12);-webkit-text-stroke:0;">0</span>
<div style="left:138px;top:144px;width:24px;height:18px;background:#f2c500;"></div>
<span class="t" style="top:147px;font-size:10.6px;color:#3a3000;left:150px;transform:translateX(-50%);transform:translate(-50%,0.6px) scaleX(1.12);-webkit-text-stroke:0;">0</span>
<div style="left:138px;top:178px;width:53px;height:18px;background:#f2c500;"></div>
<span class="t" style="top:181px;font-size:10.6px;color:#3a3000;left:150px;transform:translateX(-50%);transform:translate(-50%,0.6px) scaleX(1.12);-webkit-text-stroke:0;">0</span>
<div style="left:138px;top:212px;width:53px;height:18px;background:#f2c500;"></div>
<span class="t" style="top:215px;font-size:10.6px;color:#3a3000;left:150px;transform:translateX(-50%);transform:translate(-50%,0.6px) scaleX(1.12);-webkit-text-stroke:0;">0</span>
<div style="left:138px;top:246px;width:53px;height:18px;background:#f2c500;"></div>
<span class="t" style="top:249px;font-size:10.6px;color:#3a3000;left:150px;transform:translateX(-50%);transform:translate(-50%,0.6px) scaleX(1.12);-webkit-text-stroke:0;">0</span>
<div style="left:138px;top:280px;width:24px;height:17px;background:#f2c500;"></div>
<span class="t" style="top:283px;font-size:10.6px;color:#3a3000;left:150px;transform:translateX(-50%);transform:translate(-50%,0.6px) scaleX(1.12);-webkit-text-stroke:0;">0</span>
<div style="left:138px;top:315px;width:24px;height:17px;background:#f2c500;"></div>
<span class="t" style="top:317px;font-size:10.6px;color:#3a3000;left:150px;transform:translateX(-50%);transform:translate(-50%,0.6px) scaleX(1.12);-webkit-text-stroke:0;">0</span>
<div style="left:138px;top:347.2px;width:53px;height:17.8px;background:#f2c500;"></div>
<span class="t" style="top:350px;font-size:10.6px;color:#3a3000;left:150px;transform:translateX(-50%);transform:translate(-50%,0.6px) scaleX(1.12);-webkit-text-stroke:0;">0</span>
<div style="left:138px;top:366.2px;width:53px;height:17.8px;background:#f2c500;"></div>
<span class="t" style="top:369px;font-size:10.6px;color:#3a3000;left:150px;transform:translateX(-50%);transform:translate(-50%,0.6px) scaleX(1.12);-webkit-text-stroke:0;">0</span>
<div style="left:138px;top:400.2px;width:53px;height:17.8px;background:#f2c500;"></div>
<span class="t" style="top:403px;font-size:10.6px;color:#3a3000;left:150px;transform:translateX(-50%);transform:translate(-50%,0.6px) scaleX(1.12);-webkit-text-stroke:0;">0</span>
<div style="left:138px;top:419.3px;width:53px;height:17.7px;background:#f2c500;"></div>
<span class="t" style="top:422px;font-size:10.6px;color:#3a3000;left:150px;transform:translateX(-50%);transform:translate(-50%,0.6px) scaleX(1.12);-webkit-text-stroke:0;">0</span>
<div style="left:138px;top:453px;width:24px;height:18px;background:#f2c500;"></div>
<span class="t" style="top:456px;font-size:10.6px;color:#3a3000;left:150px;transform:translateX(-50%);transform:translate(-50%,0.6px) scaleX(1.12);-webkit-text-stroke:0;">0</span>
<div style="left:138px;top:487px;width:24px;height:18px;background:#f2c500;"></div>
<span class="t" style="top:490px;font-size:10.6px;color:#3a3000;left:150px;transform:translateX(-50%);transform:translate(-50%,0.6px) scaleX(1.12);-webkit-text-stroke:0;">0</span>
<div style="left:138px;top:520.6px;width:24px;height:18px;background:#f2c500;"></div>
<span class="t" style="top:524px;font-size:10.6px;color:#3a3000;left:150px;transform:translateX(-50%);transform:translate(-50%,0.6px) scaleX(1.12);-webkit-text-stroke:0;">0</span>
<div style="left:138px;top:329px;width:24px;height:2px;background:#0a0a0a;"></div>
<span class="t" style="top:8px;font-size:11px;color:#1a1a2a;left:228px;letter-spacing:-0.12px;">Modele de soumission officiel</span>
<span class="t" style="top:42px;font-size:11px;color:#ffffff;left:228px;letter-spacing:0.2px;">Total du projet</span>
<span class="t" style="top:61px;font-size:11px;color:#ffffff;left:228px;letter-spacing:-0.32px;">01-Frais Généraux</span>
<span class="t" style="top:80px;font-size:11px;color:#ffffff;left:228px;letter-spacing:-0.1px;">02 - Conditions existantes/ aménagement du site</span>
<span class="t" style="top:113px;font-size:11px;color:#ffffff;left:228px;letter-spacing:0.03px;">06 Total cloison &amp;plafonds</span>
<span class="t" style="top:147px;font-size:11px;color:#1b1b1b;left:228px;letter-spacing:-0.06px;">Mur intérieur non porteur</span>
<span class="t" style="top:181px;font-size:11px;color:#1b1b1b;left:228px;letter-spacing:-0.17px;">Ossature de bois</span>
<span class="t" style="top:215px;font-size:11px;color:#1b1b1b;left:228px;letter-spacing:-0.14px;">Isolation Cloison</span>
<span class="t" style="top:249px;font-size:11px;color:#1b1b1b;left:228px;letter-spacing:-0.28px;">Gypse murs</span>
<span class="t" style="top:283px;font-size:11px;color:#1b1b1b;left:228px;letter-spacing:-0.04px;">Plafond intérieuravec gypse&amp;isolation acoustique</span>
<span class="t" style="top:317px;font-size:11px;color:#1b1b1b;left:228px;letter-spacing:-0.15px;">Relevé plafond</span>
<span class="t" style="top:350px;font-size:11px;color:#1b1b1b;left:228px;letter-spacing:-0.24px;">Dimensions plafonds</span>
<span class="t" style="top:369px;font-size:11px;color:#1b1b1b;left:228px;letter-spacing:-0.24px;">Dimensions plafonds</span>
<span class="t" style="top:403px;font-size:11px;color:#1b1b1b;left:228px;letter-spacing:-0.27px;">Gypse plafonds</span>
<span class="t" style="top:422px;font-size:11px;color:#1b1b1b;left:228px;letter-spacing:-0.12px;">Isolant acoustique plafonds</span>
<span class="t" style="top:456px;font-size:11px;color:#ffffff;left:228px;letter-spacing:-0.34px;">Mur Extérieur</span>
<span class="t" style="top:490px;font-size:11px;color:#1b1b1b;left:228px;letter-spacing:-0.24px;">Mur extérieur</span>
<span class="t" style="top:524px;font-size:11px;color:#ffffff;left:228px;letter-spacing:-0.11px;">09 - Finition</span>
<span class="t" style="top:42px;font-size:11px;color:#ffffff;left:576.8px;letter-spacing:-0.07px;">Montant Forfaitaire</span>
<span class="t" style="top:61px;font-size:11px;color:#ffffff;left:576.8px;letter-spacing:-0.46px;">Frais</span>
<span class="t" style="top:80px;font-size:11px;color:#ffffff;left:576.8px;letter-spacing:-0.17px;">Excavation/remblai</span>
<span class="t" style="top:113px;font-size:11px;color:#ffffff;left:576.8px;letter-spacing:0.06px;">Murs &amp;plafonds</span>
<span class="t" style="top:456px;font-size:11px;color:#ffffff;left:576.8px;letter-spacing:-0.31px;">Mur Extérieur</span>
<span class="t" style="top:524px;font-size:11px;color:#ffffff;left:576.8px;letter-spacing:-0.1px;">Plâtre/peinture</span>
<span class="t" style="top:351px;font-size:11px;color:#222;left:576.6px;">a</span>
<span class="t" style="top:370px;font-size:11px;color:#222;left:576.6px;">a 1</span>
<svg style="left:199.7px;top:314.6px;" width="18" height="17" viewBox="0 0 18 17"><path d="M0.9 15.9C-0.7 10 -0.1 3.6 4.4 1.2C7.4 -0.4 10.8 0.2 12.4 2L15.3 6L13.7 7.4V15.9Z" fill="#050505"/><ellipse cx="6.8" cy="9.5" rx="4.3" ry="5.1" fill="#fbfbfb"/><path d="M4.5 6.7H9L6.5 12.6" fill="none" stroke="#111" stroke-width="1.55"/><rect x="13.8" y="14.4" width="3.7" height="1.5" rx="0.7" fill="#050505"/></svg>
<svg style="left:199.7px;top:348.2px;" width="18" height="17" viewBox="0 0 18 17"><path d="M0.9 15.9C-0.7 10 -0.1 3.6 4.4 1.2C7.4 -0.4 10.8 0.2 12.4 2L15.3 6L13.7 7.4V15.9Z" fill="#050505"/><ellipse cx="6.8" cy="9.5" rx="4.3" ry="5.1" fill="#fbfbfb"/><path d="M4.5 6.7H9L6.5 12.6" fill="none" stroke="#111" stroke-width="1.55"/><rect x="13.8" y="14.4" width="3.7" height="1.5" rx="0.7" fill="#050505"/></svg>
<svg style="left:199.7px;top:367px;" width="18" height="17" viewBox="0 0 18 17"><path d="M0.9 15.9C-0.7 10 -0.1 3.6 4.4 1.2C7.4 -0.4 10.8 0.2 12.4 2L15.3 6L13.7 7.4V15.9Z" fill="#050505"/><ellipse cx="6.8" cy="9.5" rx="4.3" ry="5.1" fill="#fbfbfb"/><path d="M4.5 6.7H9L6.5 12.6" fill="none" stroke="#111" stroke-width="1.55"/><rect x="13.8" y="14.4" width="3.7" height="1.5" rx="0.7" fill="#050505"/></svg>
<div style="left:11px;top:17.5px;width:1px;height:30.1px;background:#0c0c0c;"></div>
<div style="left:11px;top:30px;width:12.5px;height:1px;background:#0c0c0c;"></div>
<div style="left:11px;top:47px;width:9px;height:1px;background:#0c0c0c;"></div>
<div style="left:23.2px;top:51.5px;width:1.7px;height:477.9px;background:#2b2b2b;"></div>
<div style="left:24px;top:66px;width:11.8px;height:1px;background:#0c0c0c;"></div>
<div style="left:24px;top:84px;width:11.8px;height:1px;background:#0c0c0c;"></div>
<div style="left:24px;top:101px;width:11.8px;height:1px;background:#0c0c0c;"></div>
<div style="left:24px;top:444px;width:11.8px;height:1px;background:#0c0c0c;"></div>
<div style="left:24px;top:512px;width:11.8px;height:1px;background:#0c0c0c;"></div>
<div style="left:24px;top:118px;width:8px;height:1px;background:#0c0c0c;"></div>
<div style="left:24px;top:461px;width:8px;height:1px;background:#0c0c0c;"></div>
<div style="left:24px;top:529px;width:8px;height:1px;background:#0c0c0c;"></div>
<div style="left:36px;top:123px;width:1px;height:165.6px;background:#0c0c0c;"></div>
<div style="left:36px;top:135px;width:11.9px;height:1px;background:#0c0c0c;"></div>
<div style="left:36px;top:152px;width:8.3px;height:1px;background:#0c0c0c;"></div>
<div style="left:36px;top:271px;width:11.9px;height:1px;background:#0c0c0c;"></div>
<div style="left:36px;top:288px;width:8.3px;height:1px;background:#0c0c0c;"></div>
<div style="left:48px;top:157px;width:1px;height:97.6px;background:#0c0c0c;"></div>
<div style="left:48px;top:169px;width:12.1px;height:1px;background:#0c0c0c;"></div>
<div style="left:48px;top:203px;width:12.1px;height:1px;background:#0c0c0c;"></div>
<div style="left:48px;top:237px;width:12.1px;height:1px;background:#0c0c0c;"></div>
<div style="left:48px;top:186px;width:8.5px;height:1px;background:#0c0c0c;"></div>
<div style="left:48px;top:220px;width:8.5px;height:1px;background:#0c0c0c;"></div>
<div style="left:48px;top:254px;width:8.5px;height:1px;background:#0c0c0c;"></div>
<div style="left:48px;top:292.8px;width:1px;height:134.8px;background:#0c0c0c;"></div>
<div style="left:48px;top:305px;width:12.1px;height:1px;background:#0c0c0c;"></div>
<div style="left:48px;top:322px;width:8.5px;height:1px;background:#0c0c0c;"></div>
<div style="left:48px;top:391px;width:12.1px;height:1px;background:#0c0c0c;"></div>
<div style="left:48px;top:409px;width:8.5px;height:1px;background:#0c0c0c;"></div>
<div style="left:48px;top:427px;width:8.5px;height:1px;background:#0c0c0c;"></div>
<div style="left:60px;top:326.3px;width:1px;height:48.8px;background:#0c0c0c;"></div>
<div style="left:60px;top:339px;width:12.2px;height:1px;background:#0c0c0c;"></div>
<div style="left:60px;top:356px;width:12.2px;height:1px;background:#0c0c0c;"></div>
<div style="left:60px;top:375px;width:12.2px;height:1px;background:#0c0c0c;"></div>
<div style="left:36px;top:465.8px;width:1px;height:29.6px;background:#0c0c0c;"></div>
<div style="left:36px;top:478px;width:11.9px;height:1px;background:#0c0c0c;"></div>
<div style="left:36px;top:495px;width:8.3px;height:1px;background:#0c0c0c;"></div>
<svg style="left:7.1px;top:8.8px;" width="9" height="9" viewBox="0 0 9 9"><rect x="0.5" y="0.5" width="8" height="8" rx="1.2" fill="#fbfbfb" stroke="#9a9a9a"/><path d="M2.3 4.5H6.7" stroke="#2b3c9e" stroke-width="1.2"/></svg>
<svg style="left:19.4px;top:43px;" width="9" height="9" viewBox="0 0 9 9"><rect x="0.5" y="0.5" width="8" height="8" rx="1.2" fill="#fbfbfb" stroke="#cfd4da"/><path d="M2.3 4.5H6.7" stroke="#2b3c9e" stroke-width="1.2"/></svg>
<svg style="left:31.7px;top:114.4px;" width="9" height="9" viewBox="0 0 9 9"><rect x="0.5" y="0.5" width="8" height="8" rx="1.2" fill="#fbfbfb" stroke="#cfd4da"/><path d="M2.3 4.5H6.7" stroke="#2b3c9e" stroke-width="1.2"/></svg>
<svg style="left:44px;top:148.3px;" width="9" height="9" viewBox="0 0 9 9"><rect x="0.5" y="0.5" width="8" height="8" rx="1.2" fill="#fbfbfb" stroke="#9a9a9a"/><path d="M2.3 4.5H6.7" stroke="#2b3c9e" stroke-width="1.2"/></svg>
<svg style="left:56.2px;top:182.2px;" width="9" height="9" viewBox="0 0 9 9"><rect x="0.5" y="0.5" width="8" height="8" rx="1.2" fill="#fbfbfb" stroke="#9a9a9a"/><path d="M2.3 4.5H6.7" stroke="#2b3c9e" stroke-width="1.2"/><path d="M4.5 2.3V6.7" stroke="#2b3c9e" stroke-width="1.2"/></svg>
<svg style="left:56.2px;top:216.2px;" width="9" height="9" viewBox="0 0 9 9"><rect x="0.5" y="0.5" width="8" height="8" rx="1.2" fill="#fbfbfb" stroke="#9a9a9a"/><path d="M2.3 4.5H6.7" stroke="#2b3c9e" stroke-width="1.2"/><path d="M4.5 2.3V6.7" stroke="#2b3c9e" stroke-width="1.2"/></svg>
<svg style="left:56.2px;top:250.2px;" width="9" height="9" viewBox="0 0 9 9"><rect x="0.5" y="0.5" width="8" height="8" rx="1.2" fill="#fbfbfb" stroke="#9a9a9a"/><path d="M2.3 4.5H6.7" stroke="#2b3c9e" stroke-width="1.2"/><path d="M4.5 2.3V6.7" stroke="#2b3c9e" stroke-width="1.2"/></svg>
<svg style="left:44px;top:284.2px;" width="9" height="9" viewBox="0 0 9 9"><rect x="0.5" y="0.5" width="8" height="8" rx="1.2" fill="#fbfbfb" stroke="#9a9a9a"/><path d="M2.3 4.5H6.7" stroke="#2b3c9e" stroke-width="1.2"/></svg>
<svg style="left:56.2px;top:317.8px;" width="9" height="9" viewBox="0 0 9 9"><rect x="0.5" y="0.5" width="8" height="8" rx="1.2" fill="#fbfbfb" stroke="#9a9a9a"/><path d="M2.3 4.5H6.7" stroke="#2b3c9e" stroke-width="1.2"/></svg>
<svg style="left:56.2px;top:404.6px;" width="9" height="9" viewBox="0 0 9 9"><rect x="0.5" y="0.5" width="8" height="8" rx="1.2" fill="#fbfbfb" stroke="#9a9a9a"/><path d="M2.3 4.5H6.7" stroke="#2b3c9e" stroke-width="1.2"/><path d="M4.5 2.3V6.7" stroke="#2b3c9e" stroke-width="1.2"/></svg>
<svg style="left:56.2px;top:423.2px;" width="9" height="9" viewBox="0 0 9 9"><rect x="0.5" y="0.5" width="8" height="8" rx="1.2" fill="#fbfbfb" stroke="#9a9a9a"/><path d="M2.3 4.5H6.7" stroke="#2b3c9e" stroke-width="1.2"/><path d="M4.5 2.3V6.7" stroke="#2b3c9e" stroke-width="1.2"/></svg>
<svg style="left:31.7px;top:457.2px;" width="9" height="9" viewBox="0 0 9 9"><rect x="0.5" y="0.5" width="8" height="8" rx="1.2" fill="#fbfbfb" stroke="#cfd4da"/><path d="M2.3 4.5H6.7" stroke="#2b3c9e" stroke-width="1.2"/></svg>
<svg style="left:44px;top:491px;" width="9" height="9" viewBox="0 0 9 9"><rect x="0.5" y="0.5" width="8" height="8" rx="1.2" fill="#fbfbfb" stroke="#9a9a9a"/><path d="M2.3 4.5H6.7" stroke="#2b3c9e" stroke-width="1.2"/><path d="M4.5 2.3V6.7" stroke="#2b3c9e" stroke-width="1.2"/></svg>
<svg style="left:31.7px;top:525px;" width="9" height="9" viewBox="0 0 9 9"><rect x="0.5" y="0.5" width="8" height="8" rx="1.2" fill="#fbfbfb" stroke="#cfd4da"/><path d="M2.3 4.5H6.7" stroke="#2b3c9e" stroke-width="1.2"/><path d="M4.5 2.3V6.7" stroke="#2b3c9e" stroke-width="1.2"/></svg>
<div style="left:5.3px;top:538.6px;width:1680.7px;height:2.2px;background:#8e8e8e;"></div>
<div style="left:5.3px;top:540.8px;width:1680.7px;height:4.4px;background:#b3b3b3;"></div>
<div style="left:5.3px;top:545.2px;width:1680.7px;height:15.8px;background:#f0f0f0;"></div>
<div style="left:22px;top:546px;width:1222.8px;height:13.8px;background:#cdcdcd;"></div>
<svg style="left:9.5px;top:548.5px;" width="8" height="9" viewBox="0 0 8 9"><path d="M6.6 1 L1.8 4.5 L6.6 8" fill="none" stroke="#3c3c3c" stroke-width="1.9"/></svg>
<div style="left:5px;top:560.8px;width:1681px;height:1.1px;background:#1a1a1a;"></div>
<div style="left:5px;top:0px;width:0.8px;height:561.8px;background:#555;"></div>
<div style="left:7.5px;top:568px;width:1682.5px;height:15.6px;background:#ffffff;border:1px solid #747474;border-bottom-color:#8f8f8f;box-sizing:border-box;border-radius:1.5px;"></div>
<span class="t" style="top:570px;font-size:10.6px;color:#222;left:9.6px;letter-spacing:-0.22px;">Paramètres</span>
<span class="t" style="top:588px;font-size:11px;color:#222;left:10.4px;letter-spacing:-0.13px;">Relevé plafond</span>
<div style="left:666.4px;top:585px;width:2.6px;height:268px;background:#0a0a0a;"></div>
<div style="left:1332.8px;top:585.5px;width:2.6px;height:267.5px;background:#0a0a0a;"></div>
<div style="left:13.4px;top:610px;width:608.2px;height:248px;background:transparent;border:1px solid #a9a9a9;box-sizing:border-box;"></div>
<div style="left:18.5px;top:605px;width:100px;height:10px;background:#ffffff;"></div>
<span class="t" style="top:606px;font-size:11px;color:#222;left:20.5px;letter-spacing:-0.39px;">Liste des paramètres</span>
<div style="left:26.2px;top:620.8px;width:55.2px;height:19px;background:#1f2a36;"></div>
<div style="left:81.2px;top:618.8px;width:41.2px;height:21px;background:#1f2a36;border-left:1px solid #2e3844;box-sizing:border-box;"></div>
<span class="t" style="top:625px;font-size:11px;color:#fff;left:34.2px;letter-spacing:-0.57px;">Systeme</span>
<span class="t" style="top:625px;font-size:11px;color:#fff;left:89.4px;letter-spacing:-0.45px;">Prive</span>
<div style="left:22.5px;top:639.3px;width:591.3px;height:1.9px;background:#20252b;"></div>
<div style="left:23.4px;top:641.2px;width:592.2px;height:1px;background:#8e8e8e;"></div>
<div style="left:23.4px;top:642px;width:592.8px;height:30.7px;background:#ffffff;border:1px solid #b4b4b4;border-top:none;border-left-color:#777;box-sizing:border-box;"></div>
<div style="left:23px;top:675px;width:577.6px;height:19.2px;background:#1f2a36;"></div>
<div style="left:41.2px;top:675.6px;width:1.1px;height:18.6px;background:#b8bcc0;"></div>
<div style="left:167px;top:675.6px;width:1.1px;height:18.6px;background:#b8bcc0;"></div>
<div style="left:394.4px;top:675.6px;width:1.1px;height:18.6px;background:#b8bcc0;"></div>
<div style="left:441.6px;top:675.6px;width:1.1px;height:18.6px;background:#b8bcc0;"></div>
<div style="left:535.4px;top:675.6px;width:1.1px;height:18.6px;background:#b8bcc0;"></div>
<div style="left:582.4px;top:675.6px;width:1.1px;height:18.6px;background:#b8bcc0;"></div>
<span class="t" style="top:679px;font-size:11px;color:#fff;left:104.3px;transform:translateX(-50%);font-weight:bold;">Code</span>
<span class="t" style="top:679px;font-size:11px;color:#fff;left:281.3px;transform:translateX(-50%);font-weight:bold;letter-spacing:0.27px;">Nom par défaut</span>
<div style="left:395.5px;top:675.6px;width:46px;height:17px;overflow:hidden;"><span class="t" style="left:0;top:3.4px;font-size:11px;font-weight:bold;color:#fff;">n. / défaut</span></div>
<span class="t" style="top:679px;font-size:11px;color:#fff;left:488.8px;transform:translateX(-50%);font-weight:bold;text-decoration:underline;">Favoris</span>
<div style="left:536.5px;top:675.6px;width:46px;height:17px;overflow:hidden;"><span class="t" style="left:-5px;top:3.4px;font-size:11px;font-weight:bold;color:#fff;text-decoration:underline;">nst. / défaut</span></div>
<div style="left:583.5px;top:675.6px;width:17px;height:17px;overflow:hidden;"><span class="t" style="left:-1px;top:3.4px;font-size:11px;font-weight:bold;color:#fff;">IsPrive</span></div>
<div style="left:600.6px;top:675px;width:16.6px;height:178px;background:#f0f0f0;border-right:1px solid #8c8c8c;border-top:1px solid #777;box-sizing:border-box;"></div>
<svg style="left:603.6px;top:679.8px;" width="10" height="8" viewBox="0 0 10 8"><path d="M1.4 6.4L5 2.2L8.6 6.4" stroke="#555" stroke-width="1.5" fill="none"/></svg>
<div style="left:23px;top:694.2px;width:577.6px;height:17.8px;background:#dff3f1;"></div>
<div style="left:23px;top:712px;width:577.6px;height:141px;background:#ffffff;"></div>
<div style="left:41.2px;top:716.8px;width:559.4px;height:1px;background:#ededed;"></div>
<div style="left:41.2px;top:735.6px;width:559.4px;height:1px;background:#ededed;"></div>
<div style="left:41.2px;top:754.3px;width:559.4px;height:1px;background:#ededed;"></div>
<div style="left:41.2px;top:773.2px;width:559.4px;height:1px;background:#ededed;"></div>
<div style="left:41.2px;top:792px;width:559.4px;height:1px;background:#ededed;"></div>
<div style="left:41.2px;top:810.7px;width:559.4px;height:1px;background:#ededed;"></div>
<div style="left:41.2px;top:829.6px;width:559.4px;height:1px;background:#ededed;"></div>
<div style="left:41.2px;top:848.3px;width:559.4px;height:1px;background:#ededed;"></div>
<div style="left:167px;top:712px;width:1px;height:141px;background:#ededed;"></div>
<div style="left:394.4px;top:712px;width:1px;height:141px;background:#ededed;"></div>
<div style="left:441.6px;top:712px;width:1px;height:141px;background:#ededed;"></div>
<div style="left:535.4px;top:712px;width:1px;height:141px;background:#ededed;"></div>
<div style="left:582.4px;top:712px;width:1px;height:141px;background:#ededed;"></div>
<div style="left:23px;top:694.2px;width:18.2px;height:158.8px;background:#f0f0f0;"></div>
<div style="left:23px;top:712px;width:18.2px;height:1px;background:#c9c9c9;"></div>
<div style="left:23px;top:716.8px;width:18.2px;height:1px;background:#c9c9c9;"></div>
<div style="left:23px;top:735.6px;width:18.2px;height:1px;background:#c9c9c9;"></div>
<div style="left:23px;top:754.3px;width:18.2px;height:1px;background:#c9c9c9;"></div>
<div style="left:23px;top:773.2px;width:18.2px;height:1px;background:#c9c9c9;"></div>
<div style="left:23px;top:792px;width:18.2px;height:1px;background:#c9c9c9;"></div>
<div style="left:23px;top:810.7px;width:18.2px;height:1px;background:#c9c9c9;"></div>
<div style="left:23px;top:829.6px;width:18.2px;height:1px;background:#c9c9c9;"></div>
<div style="left:23px;top:848.3px;width:18.2px;height:1px;background:#c9c9c9;"></div>
<div style="left:41.2px;top:694.2px;width:1px;height:158.8px;background:#9a9a9a;"></div>
<div style="left:22.6px;top:675px;width:1.2px;height:178px;background:#3a3a3a;"></div>
<div style="left:482.2px;top:712.6px;width:12px;height:1.3px;background:#a4a4a4;"></div>
<div style="left:553.2px;top:712.6px;width:12px;height:1.3px;background:#a4a4a4;"></div>
<div style="left:482.2px;top:851.3px;width:12px;height:1.7px;background:#9c9c9c;"></div>
<div style="left:553.2px;top:851.3px;width:12px;height:1.7px;background:#9c9c9c;"></div>
<span class="t" style="top:721px;font-size:11px;color:#222;left:45px;letter-spacing:-0.1px;">ValVolNet</span>
<span class="t" style="top:721px;font-size:11px;color:#222;left:170.4px;letter-spacing:-0.09px;">Volume Net</span>
<span class="t" style="top:721px;font-size:11px;color:#222;left:397.6px;">m3</span>
<span class="t" style="top:740px;font-size:11px;color:#222;left:45px;letter-spacing:-0.18px;">VitesMoy</span>
<span class="t" style="top:740px;font-size:11px;color:#222;left:170.4px;letter-spacing:-0.1px;">Vitesse moyenne (km/h)</span>
<span class="t" style="top:758px;font-size:11px;color:#222;left:45px;letter-spacing:0.1px;">Vol</span>
<span class="t" style="top:758px;font-size:11px;color:#222;left:170.4px;letter-spacing:-0.12px;">Volume Matériel Requis pour Items</span>
<span class="t" style="top:758px;font-size:11px;color:#222;left:397.6px;">m3</span>
<span class="t" style="top:777px;font-size:11px;color:#222;left:45px;letter-spacing:0.27px;">Vol/Hr</span>
<span class="t" style="top:777px;font-size:11px;color:#222;left:170.4px;letter-spacing:-0.18px;">Volume par heure</span>
<span class="t" style="top:777px;font-size:11px;color:#222;left:397.6px;">h</span>
<span class="t" style="top:796px;font-size:11px;color:#222;left:45px;letter-spacing:0.19px;">Vol/unit</span>
<span class="t" style="top:796px;font-size:11px;color:#222;left:170.4px;letter-spacing:-0.1px;">Volume par unité</span>
<span class="t" style="top:796px;font-size:11px;color:#222;left:397.6px;letter-spacing:0.07px;">m3/unit</span>
<span class="t" style="top:815px;font-size:11px;color:#222;left:45px;letter-spacing:0.09px;">VolBet</span>
<span class="t" style="top:815px;font-size:11px;color:#222;left:170.4px;letter-spacing:-0.16px;">Volume Béton</span>
<span class="t" style="top:815px;font-size:11px;color:#222;left:397.6px;">m3</span>
<span class="t" style="top:834px;font-size:11px;color:#222;left:45px;letter-spacing:-0.07px;">VolBet-s</span>
<span class="t" style="top:834px;font-size:11px;color:#222;left:170.4px;letter-spacing:-0.07px;">Volume Béton (pour formule somme)</span>
<span class="t" style="top:834px;font-size:11px;color:#222;left:397.6px;">m3</span>
<svg style="left:632.2px;top:659.6px;" width="25" height="20" viewBox="0 0 25 20"><path d="M1 10H23.4M14 1.4L23.4 10L14 18.6" stroke="#14202c" stroke-width="2.5" fill="none"/></svg>
<svg style="left:632.2px;top:697.5px;" width="25" height="20" viewBox="0 0 25 20"><path d="M24 10H1.6M11 1.4L1.6 10L11 18.6" stroke="#14202c" stroke-width="2.5" fill="none"/></svg>
<div style="left:677.8px;top:610px;width:636.4px;height:248px;background:transparent;border:1px solid #a9a9a9;box-sizing:border-box;"></div>
<div style="left:683px;top:605px;width:96.8px;height:10px;background:#ffffff;"></div>
<span class="t" style="top:606px;font-size:11px;color:#222;left:685px;letter-spacing:-0.43px;">Paramètres de l'item</span>
<div style="left:686.8px;top:625px;width:618.2px;height:31.4px;background:#ffffff;border:1px solid #b4b4b4;border-top-color:#8a8a8a;border-left-color:#777;box-sizing:border-box;"></div>
<span class="t" style="top:634px;font-size:15px;color:#8c8c8c;left:991.2px;transform:translateX(-50%);font-style:italic;font-family:'Liberation Serif',serif;-webkit-text-stroke:0;">fx</span>
<div style="left:984.5px;top:638.8px;width:15px;height:0.9px;background:#8c8c8c;"></div>
<div style="left:984.5px;top:641px;width:15px;height:0.9px;background:#8c8c8c;"></div>
<div style="left:686.8px;top:658.8px;width:618.2px;height:194.2px;background:#ababab;"></div>
<div style="left:686.8px;top:658.8px;width:557px;height:19.2px;background:#1f2a36;"></div>
<div style="left:705.4px;top:659.4px;width:1.1px;height:18.6px;background:#b8bcc0;"></div>
<div style="left:822.4px;top:659.4px;width:1.1px;height:18.6px;background:#b8bcc0;"></div>
<div style="left:997.4px;top:659.4px;width:1.1px;height:18.6px;background:#b8bcc0;"></div>
<div style="left:1044.4px;top:659.4px;width:1.1px;height:18.6px;background:#b8bcc0;"></div>
<div style="left:1102.4px;top:659.4px;width:1.1px;height:18.6px;background:#b8bcc0;"></div>
<div style="left:1149.4px;top:659.4px;width:1.1px;height:18.6px;background:#b8bcc0;"></div>
<div style="left:1196.2px;top:659.4px;width:1.1px;height:18.6px;background:#b8bcc0;"></div>
<span class="t" style="top:663px;font-size:11px;color:#fff;left:763.8px;transform:translateX(-50%);font-weight:bold;">Code</span>
<span class="t" style="top:663px;font-size:11px;color:#fff;left:910.5px;transform:translateX(-50%);font-weight:bold;letter-spacing:0.2px;">Nom des param. / Options</span>
<span class="t" style="top:663px;font-size:11px;color:#fff;left:1021.2px;transform:translateX(-50%);font-weight:bold;letter-spacing:0.26px;">Option</span>
<span class="t" style="top:663px;font-size:11px;color:#fff;left:1074.5px;transform:translateX(-50%);font-weight:bold;text-decoration:underline;letter-spacing:0.49px;">Valeur</span>
<span class="t" style="top:663px;font-size:11px;color:#fff;left:1125.3px;transform:translateX(-50%);font-weight:bold;">Unité</span>
<div style="left:1150.6px;top:659.4px;width:45.4px;height:17px;overflow:hidden;"><span class="t" style="left:-4px;top:3.4px;font-size:11px;font-weight:bold;color:#fff;text-decoration:underline;">Constante</span></div>
<span class="t" style="top:663px;font-size:11px;color:#fff;left:1220.6px;transform:translateX(-50%);font-weight:bold;letter-spacing:0.41px;">TakeOff</span>
<div style="left:686.8px;top:678px;width:557px;height:18.4px;background:#dff3f1;"></div>
<div style="left:686.8px;top:696.4px;width:557px;height:112.2px;background:#ffffff;"></div>
<div style="left:1044.4px;top:733.8px;width:58px;height:74.8px;background:#fdf8e9;"></div>
<div style="left:705.4px;top:715px;width:538.4px;height:1px;background:#ededed;"></div>
<div style="left:705.4px;top:733.8px;width:538.4px;height:1px;background:#ededed;"></div>
<div style="left:705.4px;top:752.5px;width:538.4px;height:1px;background:#ededed;"></div>
<div style="left:705.4px;top:771.3px;width:538.4px;height:1px;background:#ededed;"></div>
<div style="left:705.4px;top:790px;width:538.4px;height:1px;background:#ededed;"></div>
<div style="left:822.4px;top:696.4px;width:1px;height:112.2px;background:#ededed;"></div>
<div style="left:997.4px;top:696.4px;width:1px;height:112.2px;background:#ededed;"></div>
<div style="left:1044.4px;top:696.4px;width:1px;height:112.2px;background:#ededed;"></div>
<div style="left:1102.4px;top:696.4px;width:1px;height:112.2px;background:#ededed;"></div>
<div style="left:1149.4px;top:696.4px;width:1px;height:112.2px;background:#ededed;"></div>
<div style="left:1196.2px;top:696.4px;width:1px;height:112.2px;background:#ededed;"></div>
<div style="left:686.8px;top:678px;width:18.6px;height:130.6px;background:#f0f0f0;"></div>
<div style="left:686.8px;top:696.4px;width:18.6px;height:1px;background:#c9c9c9;"></div>
<div style="left:686.8px;top:715px;width:18.6px;height:1px;background:#c9c9c9;"></div>
<div style="left:686.8px;top:733.8px;width:18.6px;height:1px;background:#c9c9c9;"></div>
<div style="left:686.8px;top:752.5px;width:18.6px;height:1px;background:#c9c9c9;"></div>
<div style="left:686.8px;top:771.3px;width:18.6px;height:1px;background:#c9c9c9;"></div>
<div style="left:686.8px;top:790px;width:18.6px;height:1px;background:#c9c9c9;"></div>
<div style="left:705.4px;top:678px;width:1px;height:130.6px;background:#9a9a9a;"></div>
<div style="left:686.8px;top:808.6px;width:557px;height:1px;background:#8a8a8a;"></div>
<span class="t" style="top:700px;font-size:11px;color:#222;left:709.5px;">Q</span>
<span class="t" style="top:700px;font-size:11px;color:#222;left:826.6px;letter-spacing:-0.45px;">Quantité</span>
<span class="t" style="top:700px;font-size:11px;color:#222;left:1001.6px;letter-spacing:-0.45px;">Non</span>
<span class="t" style="top:700px;font-size:11px;color:#111;right:587px;font-weight:bold;">1,00</span>
<span class="t" style="top:700px;font-size:11px;color:#222;left:1105.6px;letter-spacing:0.3px;">unit</span>
<span class="t" style="top:719px;font-size:11px;color:#222;left:709.5px;">QF</span>
<span class="t" style="top:719px;font-size:11px;color:#222;left:826.6px;letter-spacing:-0.06px;">Quantité finale</span>
<span class="t" style="top:719px;font-size:11px;color:#222;left:1001.6px;letter-spacing:-0.45px;">Non</span>
<span class="t" style="top:719px;font-size:10.5px;color:#111;right:586px;text-decoration:underline;">1,00</span>
<span class="t" style="top:719px;font-size:11px;color:#222;left:1105.6px;letter-spacing:0.3px;">unit</span>
<span class="t" style="top:738px;font-size:11px;color:#222;left:709.5px;letter-spacing:-0.39px;">SurfGypP-s</span>
<span class="t" style="top:738px;font-size:11px;color:#222;left:826.6px;letter-spacing:-0.13px;">Surface gypse plafonds sous total</span>
<span class="t" style="top:738px;font-size:11px;color:#222;left:1001.6px;">Validatio</span>
<span class="t" style="top:738px;font-size:10.5px;color:#111;right:586px;text-decoration:underline;">100,00</span>
<span class="t" style="top:738px;font-size:11px;color:#222;left:1105.6px;letter-spacing:0.3px;">pi2</span>
<span class="t" style="top:757px;font-size:11px;color:#222;left:709.5px;letter-spacing:-0.25px;">PlafSurfJoints-s</span>
<span class="t" style="top:757px;font-size:11px;color:#222;left:826.6px;letter-spacing:-0.18px;">Surface Primer Joints (pour somme)</span>
<span class="t" style="top:757px;font-size:11px;color:#222;left:1001.6px;">Validatio</span>
<span class="t" style="top:757px;font-size:10.5px;color:#111;right:586px;text-decoration:underline;">100,00</span>
<span class="t" style="top:757px;font-size:11px;color:#222;left:1105.6px;letter-spacing:0.3px;">pi2</span>
<span class="t" style="top:775px;font-size:11px;color:#222;left:709.5px;letter-spacing:-0.35px;">PlafSurfPrim-s</span>
<span class="t" style="top:775px;font-size:11px;color:#222;left:826.6px;letter-spacing:-0.23px;">Surface Primer (pour somme)</span>
<span class="t" style="top:775px;font-size:11px;color:#222;left:1001.6px;">Validatio</span>
<span class="t" style="top:775px;font-size:10.5px;color:#111;right:586px;text-decoration:underline;">100,00</span>
<span class="t" style="top:775px;font-size:11px;color:#222;left:1105.6px;letter-spacing:0.3px;">pi2</span>
<span class="t" style="top:795px;font-size:11px;color:#222;left:709.5px;letter-spacing:-0.27px;">PlafSurfPeint-s</span>
<span class="t" style="top:795px;font-size:11px;color:#222;left:826.6px;letter-spacing:-0.2px;">Surface Peinture (pour somme)</span>
<div style="left:1001.6px;top:793px;width:27px;height:14px;overflow:hidden;"><span class="t" style="left:0;top:2px;font-size:11px;color:#222;">Validation</span></div>
<span class="t" style="top:795px;font-size:10.5px;color:#111;right:586px;text-decoration:underline;">100,00</span>
<span class="t" style="top:795px;font-size:11px;color:#222;left:1105.6px;letter-spacing:0.3px;">pi2</span>
<div style="left:705.4px;top:790.4px;width:538.4px;height:2px;background:#0a0a0a;"></div>
<div style="left:705.4px;top:807px;width:538.4px;height:1.8px;background:#0a0a0a;"></div>
<div style="left:705.2px;top:790.4px;width:1.7px;height:18.4px;background:#0a0a0a;"></div>
<div style="left:1242.3px;top:790.4px;width:1.6px;height:18.4px;background:#0a0a0a;"></div>
<div style="left:686.6px;top:658.8px;width:1px;height:194.2px;background:#6e6e6e;"></div>
<div style="left:1028.6px;top:792.4px;width:15.8px;height:14.6px;background:#f1f1f1;border:1px solid #c4c4c4;box-sizing:border-box;"></div>
<svg style="left:1032.6px;top:797.4px;" width="8" height="5" viewBox="0 0 8 5"><path d="M0.4 0.6H7.6L4 4.6Z" fill="#111"/></svg>
<span class="t" style="top:592px;font-size:11px;color:#333;left:1347.6px;letter-spacing:-0.19px;">Formule</span>
<div style="left:1393px;top:587.6px;width:68.6px;height:20.6px;background:#1f2a36;"></div>
<div style="left:1393px;top:587.6px;width:1px;height:22px;background:#0a0a0a;"></div>
<span class="t" style="top:592px;font-size:11px;color:#fff;left:1401.8px;letter-spacing:-0.01px;">Description</span>
<div style="left:1341.4px;top:627.6px;width:349.6px;height:853px;background:transparent;border:1px solid #c4c4c4;box-sizing:border-box;"></div>
<span class="t" style="top:647px;font-size:10.2px;color:#222;left:1397.6px;letter-spacing:0.11px;">Paramètre :</span>
<span class="t" style="top:670px;font-size:10.2px;color:#222;left:1397.6px;letter-spacing:0.09px;">De l'item :</span>
<div style="left:1463.2px;top:644.4px;width:227.8px;height:17px;background:#ffffff;border:1px solid #e3e3e3;border-top-color:#b9b9b9;border-left-color:#b9b9b9;box-sizing:border-box;"></div>
<div style="left:1463.2px;top:666.6px;width:227.8px;height:17px;background:#ffffff;border:1px solid #e3e3e3;border-top-color:#b9b9b9;border-left-color:#b9b9b9;box-sizing:border-box;"></div>
<span class="t" style="top:647px;font-size:11px;color:#222;left:1466.6px;letter-spacing:-0.2px;">Surface Peinture (pour somme)</span>
<span class="t" style="top:670px;font-size:11px;color:#222;left:1466.6px;letter-spacing:-0.1px;">Relevé plafond</span>
<div style="left:1398.2px;top:696.4px;width:292.8px;height:49px;background:transparent;border:1px solid #d0d0d0;box-sizing:border-box;"></div>
<div style="left:1405.6px;top:691px;width:35px;height:10px;background:#ffffff;"></div>
<span class="t" style="top:692px;font-size:10.2px;color:#222;left:1407.8px;letter-spacing:0.28px;">Valeur</span>
<svg style="left:1412.2px;top:704.8px;" width="13" height="13" viewBox="0 0 13 13"><circle cx="6.5" cy="6.5" r="4.7" fill="#ffffff" stroke="#d9d9d9" stroke-width="1.1"/><path d="M3.2 9.8A4.7 4.7 0 0 1 9.8 3.2" stroke="#4a4a4a" stroke-width="1.3" fill="none"/></svg>
<svg style="left:1412.2px;top:725.3px;" width="13" height="13" viewBox="0 0 13 13"><circle cx="6.5" cy="6.5" r="4.7" fill="#ffffff" stroke="#d9d9d9" stroke-width="1.1"/><path d="M3.2 9.8A4.7 4.7 0 0 1 9.8 3.2" stroke="#4a4a4a" stroke-width="1.3" fill="none"/><circle cx="6.5" cy="6.5" r="2" fill="#0a0a0a"/></svg>
<span class="t" style="top:707px;font-size:10.2px;color:#222;left:1429.8px;letter-spacing:0.03px;">Manuel</span>
<span class="t" style="top:728px;font-size:10.2px;color:#222;left:1429.8px;letter-spacing:0.23px;">Formule</span>
<div style="left:1488.2px;top:701.4px;width:123.8px;height:17.4px;background:#f0f0f0;border:1px solid #c9c9c9;box-sizing:border-box;"></div>
<div style="left:1488.2px;top:722px;width:123.8px;height:17.4px;background:#ffffff;border:1px solid #9a9a9a;box-sizing:border-box;"></div>
<span class="t" style="top:726px;font-size:9.8px;color:#111;left:1491.2px;">100</span>
<div style="left:1624.4px;top:701.4px;width:66.6px;height:17.4px;background:#ffffff;border:1px solid #c9c9c9;box-sizing:border-box;"></div>
<div style="left:1624.4px;top:722px;width:66.6px;height:17.4px;background:#ffffff;border:1px solid #9a9a9a;box-sizing:border-box;"></div>
<span class="t" style="top:726px;font-size:9.8px;color:#111;left:1626.4px;">pi2</span>
<svg style="left:1358.4px;top:728.4px;" width="16" height="13" viewBox="0 0 16 13"><path d="M0.6 6.5H14.6M9 1L14.6 6.5L9 12" stroke="#555" stroke-width="1.3" fill="none"/></svg>
<div style="left:1396.6px;top:751.4px;width:294.4px;height:28px;background:#ffffff;border:1px solid #b8b8b8;border-left:2px solid #6a6a6a;border-top-color:#8a8a8a;box-sizing:border-box;"></div>
<span class="t" style="top:760px;font-size:15px;color:#9a9a9a;left:1599.2px;transform:translateX(-50%);font-style:italic;font-family:'Liberation Serif',serif;-webkit-text-stroke:0;">fx</span>
<span class="t" style="top:760px;font-size:13px;color:#9a9a9a;left:1627.3px;transform:translateX(-50%);font-family:'Liberation Serif',serif;-webkit-text-stroke:0;">“T”</span>
<div style="left:1396.6px;top:782.2px;width:294.4px;height:853px;background:#ffffff;border:1px solid #b0b0b0;border-left:2px solid #6a6a6a;border-top-color:#777;box-sizing:border-box;"></div>
<span class="t" style="left:1406.8px;top:787px;font-size:12.3px;font-family:'Liberation Mono',monospace;color:#222;"><span style="position:static;color:#1a16f0">sum</span> ( <span style="position:static;color:#1a16f0">[PlafSurfPeint-s]</span> )</span>
<svg style="left:0px;top:0px;" width="1686" height="853" viewBox="0 0 1686 853"><defs><linearGradient id="cbg" x1="0" y1="0" x2="1" y2="1"><stop offset="0" stop-color="#cdd2db"/><stop offset="1" stop-color="#ffffff"/></linearGradient><linearGradient id="bbg" x1="0" y1="0" x2="1" y2="1"><stop offset="0" stop-color="#49bdea"/><stop offset="0.55" stop-color="#1f86c2"/><stop offset="1" stop-color="#0e4f8c"/></linearGradient></defs><g transform="translate(170.5 41)"><rect x="0.5" y="0.5" width="11" height="11" fill="#fff" stroke="#8e8f8f"/><rect x="2" y="2" width="8" height="8" fill="url(#cbg)"/><path d="M3.1 6.3L5.4 9.3L9.3 2.9" fill="none" stroke="#3a4c96" stroke-width="1.75"/></g><g transform="translate(170.5 181)"><rect x="0.5" y="0.5" width="11" height="11" fill="#fff" stroke="#8e8f8f"/><rect x="2" y="2" width="8" height="8" fill="url(#cbg)"/><path d="M3.1 6.3L5.4 9.3L9.3 2.9" fill="none" stroke="#3a4c96" stroke-width="1.75"/></g><g transform="translate(170.5 215)"><rect x="0.5" y="0.5" width="11" height="11" fill="#fff" stroke="#8e8f8f"/><rect x="2" y="2" width="8" height="8" fill="url(#cbg)"/><path d="M3.1 6.3L5.4 9.3L9.3 2.9" fill="none" stroke="#3a4c96" stroke-width="1.75"/></g><g transform="translate(170.5 249)"><rect x="0.5" y="0.5" width="11" height="11" fill="#fff" stroke="#8e8f8f"/><rect x="2" y="2" width="8" height="8" fill="url(#cbg)"/><path d="M3.1 6.3L5.4 9.3L9.3 2.9" fill="none" stroke="#3a4c96" stroke-width="1.75"/></g><g transform="translate(170.5 350)"><rect x="0.5" y="0.5" width="11" height="11" fill="#fff" stroke="#8e8f8f"/><rect x="2" y="2" width="8" height="8" fill="url(#cbg)"/><path d="M3.1 6.3L5.4 9.3L9.3 2.9" fill="none" stroke="#3a4c96" stroke-width="1.75"/></g><g transform="translate(170.5 369)"><rect x="0.5" y="0.5" width="11" height="11" fill="#fff" stroke="#8e8f8f"/><rect x="2" y="2" width="8" height="8" fill="url(#cbg)"/><path d="M3.1 6.3L5.4 9.3L9.3 2.9" fill="none" stroke="#3a4c96" stroke-width="1.75"/></g><g transform="translate(170.5 403)"><rect x="0.5" y="0.5" width="11" height="11" fill="#fff" stroke="#8e8f8f"/><rect x="2" y="2" width="8" height="8" fill="url(#cbg)"/><path d="M3.1 6.3L5.4 9.3L9.3 2.9" fill="none" stroke="#3a4c96" stroke-width="1.75"/></g><g transform="translate(170.5 422)"><rect x="0.5" y="0.5" width="11" height="11" fill="#fff" stroke="#8e8f8f"/><rect x="2" y="2" width="8" height="8" fill="url(#cbg)"/><path d="M3.1 6.3L5.4 9.3L9.3 2.9" fill="none" stroke="#3a4c96" stroke-width="1.75"/></g><g transform="translate(170.5 60)"><rect x="0.5" y="0.5" width="11" height="11" fill="#fff" stroke="#8e8f8f"/><rect x="2" y="2" width="8" height="8" fill="url(#cbg)"/><path d="M3.1 6.3L5.4 9.3L9.3 2.9" fill="none" stroke="#3a4c96" stroke-width="1.75"/></g><g transform="translate(39.5 657.3)"><path d="M-7.5 0H7.5M0 -7.4V7.4" stroke="#0c1826" stroke-width="4.2" fill="none"/></g><g transform="translate(69.55 657.3)"><rect x="-3.3" y="-9.8" width="6.6" height="2.4" rx="0.8" fill="#0c1826"/><rect x="-9.4" y="-7.9" width="18.8" height="3.1" rx="0.7" fill="#0c1826"/><path d="M-8 -3.9H7.9L7.4 7.6Q7.3 8.6 6.3 8.6H-6.4Q-7.4 8.6 -7.5 7.6Z" fill="#0c1826"/><path d="M-4.6 -2V6.8M-1.5 -2V6.8M1.5 -2V6.8M4.5 -2V6.8" stroke="#f4f6f8" stroke-width="1.05"/></g><g transform="translate(103.5 657.3)"><path d="M-9.3 -6.6L-2.5 2.3V8.6H2.7V2.3L9.5 -6.6Z" fill="#0c1826"/><ellipse cx="0.1" cy="-6.7" rx="8.8" ry="2.7" fill="#fff" stroke="#0c1826" stroke-width="1.5"/><path d="M-1.3 -2.7L1.5 0.1M1.5 -2.7L-1.3 0.1" stroke="#fff" stroke-width="1.1"/></g><g transform="translate(133.5 657.3)"><path d="M-2.6 -2.1H8.6M-8.4 2.6H3.4" stroke="#0c1826" stroke-width="2.7" stroke-linecap="round" fill="none"/></g><g transform="translate(164.2 657.3)"><path d="M-7 -6.4V5H7.2" stroke="#2f363e" stroke-width="1.35" fill="none"/><path d="M-3.9 0.2V3.7M-1.3 -3V3.7M1.8 -0.4V3.7M4.9 -5.6V3.7" stroke="#2f363e" stroke-width="1.5" fill="none"/></g><g transform="translate(194.2 657.3)"><rect x="-4.5" y="-8.5" width="9" height="2.3" fill="#0c1826"/><rect x="-9.7" y="-5.2" width="18.9" height="8.5" rx="1.4" fill="#0c1826"/><rect x="-4.1" y="1.6" width="8.2" height="6.3" fill="#fff" stroke="#39434d" stroke-width="1.5"/><circle cx="-7.4" cy="-2.9" r="0.8" fill="#fff"/></g><g transform="translate(224.2 657.3)"><path d="M-6.7 -0.8A6.8 6.8 0 0 1 5 -4.6" stroke="#2a3038" stroke-width="1.45" fill="none"/><path d="M6.7 0.8A6.8 6.8 0 0 1 -5 4.6" stroke="#2a3038" stroke-width="1.45" fill="none"/><path d="M7.3 -7.4V-2.2H2.2Z" fill="#2a3038"/><path d="M-7.3 7.4V2.2H-2.2Z" fill="#2a3038"/></g><g transform="translate(254.5 657.3)"><path d="M-6 5.4L4.6 -5.2" stroke="#0c1826" stroke-width="6.4" fill="none"/><path d="M-5.4 4.8L3.4 -4" stroke="#fff" stroke-width="1.7" fill="none"/><path d="M5.2 -5.8L6.8 -7.4" stroke="#0c1826" stroke-width="5.6" stroke-linecap="round" fill="none"/><path d="M-9.2 8.6L-8.4 3.2L-3.8 7.6Z" fill="#0c1826"/></g><g transform="translate(284.45 657.3)"><rect x="-9.5" y="-10.4" width="19" height="18.8" rx="3.4" fill="#0c1826"/><path d="M-5.3 -0.2L-1.3 3.5L5.4 -4.4" stroke="#fff" stroke-width="2.7" fill="none"/></g><g transform="translate(316.6 657.3)"><path d="M-4.5 -9.9H4.5V-1.3H7.6L0 5.2L-7.6 -1.3H-4.5Z" fill="#0c1826"/><path d="M0 -8V-2.4M-2.8 -5.2H2.8" stroke="#fff" stroke-width="1.5"/><path d="M-6.9 7.6H7.4" stroke="#0c1826" stroke-width="1.7"/></g><g transform="translate(482.2 697)"><rect x="0.5" y="0.5" width="11" height="11" fill="#fff" stroke="#8e8f8f"/><rect x="2.2" y="2" width="7.8" height="7.8" fill="url(#bbg)" stroke="#0a2a6e" stroke-width="0.9"/></g><g transform="translate(553.2 697)"><rect x="0.5" y="0.5" width="11" height="11" fill="#fff" stroke="#8e8f8f"/><rect x="2.2" y="2" width="7.8" height="7.8" fill="url(#bbg)" stroke="#0a2a6e" stroke-width="0.9"/></g><g transform="translate(482.2 719.8)"><rect x="0.5" y="0.5" width="11" height="11" fill="#fff" stroke="#8e8f8f"/><rect x="2" y="2" width="8" height="8" fill="url(#cbg)"/><path d="M3.1 6.3L5.4 9.3L9.3 2.9" fill="none" stroke="#3a4c96" stroke-width="1.75"/></g><g transform="translate(553.2 719.8)"><rect x="0.5" y="0.5" width="11" height="11" fill="#fff" stroke="#8e8f8f"/><rect x="2" y="2" width="8" height="8" fill="url(#cbg)"/></g><g transform="translate(482.2 738.6)"><rect x="0.5" y="0.5" width="11" height="11" fill="#fff" stroke="#8e8f8f"/><rect x="2" y="2" width="8" height="8" fill="url(#cbg)"/><path d="M3.1 6.3L5.4 9.3L9.3 2.9" fill="none" stroke="#3a4c96" stroke-width="1.75"/></g><g transform="translate(553.2 738.6)"><rect x="0.5" y="0.5" width="11" height="11" fill="#fff" stroke="#8e8f8f"/><rect x="2" y="2" width="8" height="8" fill="url(#cbg)"/></g><g transform="translate(482.2 757.3)"><rect x="0.5" y="0.5" width="11" height="11" fill="#fff" stroke="#8e8f8f"/><rect x="2" y="2" width="8" height="8" fill="url(#cbg)"/><path d="M3.1 6.3L5.4 9.3L9.3 2.9" fill="none" stroke="#3a4c96" stroke-width="1.75"/></g><g transform="translate(553.2 757.3)"><rect x="0.5" y="0.5" width="11" height="11" fill="#fff" stroke="#8e8f8f"/><rect x="2" y="2" width="8" height="8" fill="url(#cbg)"/></g><g transform="translate(482.2 776.1)"><rect x="0.5" y="0.5" width="11" height="11" fill="#fff" stroke="#8e8f8f"/><rect x="2" y="2" width="8" height="8" fill="url(#cbg)"/><path d="M3.1 6.3L5.4 9.3L9.3 2.9" fill="none" stroke="#3a4c96" stroke-width="1.75"/></g><g transform="translate(553.2 776.1)"><rect x="0.5" y="0.5" width="11" height="11" fill="#fff" stroke="#8e8f8f"/><rect x="2" y="2" width="8" height="8" fill="url(#cbg)"/></g><g transform="translate(482.2 794.8)"><rect x="0.5" y="0.5" width="11" height="11" fill="#fff" stroke="#8e8f8f"/><rect x="2" y="2" width="8" height="8" fill="url(#cbg)"/><path d="M3.1 6.3L5.4 9.3L9.3 2.9" fill="none" stroke="#3a4c96" stroke-width="1.75"/></g><g transform="translate(553.2 794.8)"><rect x="0.5" y="0.5" width="11" height="11" fill="#fff" stroke="#8e8f8f"/><rect x="2" y="2" width="8" height="8" fill="url(#cbg)"/></g><g transform="translate(482.2 813.7)"><rect x="0.5" y="0.5" width="11" height="11" fill="#fff" stroke="#8e8f8f"/><rect x="2" y="2" width="8" height="8" fill="url(#cbg)"/><path d="M3.1 6.3L5.4 9.3L9.3 2.9" fill="none" stroke="#3a4c96" stroke-width="1.75"/></g><g transform="translate(553.2 813.7)"><rect x="0.5" y="0.5" width="11" height="11" fill="#fff" stroke="#8e8f8f"/><rect x="2" y="2" width="8" height="8" fill="url(#cbg)"/></g><g transform="translate(482.2 832.5)"><rect x="0.5" y="0.5" width="11" height="11" fill="#fff" stroke="#8e8f8f"/><rect x="2" y="2" width="8" height="8" fill="url(#cbg)"/><path d="M3.1 6.3L5.4 9.3L9.3 2.9" fill="none" stroke="#3a4c96" stroke-width="1.75"/></g><g transform="translate(553.2 832.5)"><rect x="0.5" y="0.5" width="11" height="11" fill="#fff" stroke="#8e8f8f"/><rect x="2" y="2" width="8" height="8" fill="url(#cbg)"/></g><g transform="translate(707 641.1)"><path d="M-7.5 0H7.5M0 -7.4V7.4" stroke="#0c1826" stroke-width="4.2" fill="none"/></g><g transform="translate(740.8 641.1)"><rect x="-3.3" y="-9.8" width="6.6" height="2.4" rx="0.8" fill="#0c1826"/><rect x="-9.4" y="-7.9" width="18.8" height="3.1" rx="0.7" fill="#0c1826"/><path d="M-8 -3.9H7.9L7.4 7.6Q7.3 8.6 6.3 8.6H-6.4Q-7.4 8.6 -7.5 7.6Z" fill="#0c1826"/><path d="M-4.6 -2V6.8M-1.5 -2V6.8M1.5 -2V6.8M4.5 -2V6.8" stroke="#f4f6f8" stroke-width="1.05"/></g><g transform="translate(775.3 641.1)"><path d="M-6.4 -8.5H6.5M0 -6.4V8.1M-5.5 -0.8L0 -6.3L5.4 -0.8" stroke="#141414" stroke-width="1.45" fill="none"/></g><g transform="translate(805.4 641.1)"><path d="M0 -7.2V9M-6.3 -0.8L0 -7.2L6 -0.8" stroke="#141414" stroke-width="1.45" fill="none"/></g><g transform="translate(835.4 641.1)"><path d="M0 -7.9V8.4M-6 2.4L0 8.5L6 2.4" stroke="#141414" stroke-width="1.45" fill="none"/></g><g transform="translate(865.6 641.1)"><path d="M0 -7.9V5.7M-5.1 0.6L0 5.7L5 0.6M-6.1 7.9H6.2" stroke="#141414" stroke-width="1.45" fill="none"/></g><g transform="translate(899.5 641.1)"><path d="M-9.3 -6.6L-2.5 2.3V8.6H2.7V2.3L9.5 -6.6Z" fill="#0c1826"/><ellipse cx="0.1" cy="-6.7" rx="8.8" ry="2.7" fill="#fff" stroke="#0c1826" stroke-width="1.5"/><path d="M-1.3 -2.7L1.5 0.1M1.5 -2.7L-1.3 0.1" stroke="#fff" stroke-width="1.1"/></g><g transform="translate(929.6 641.1)"><path d="M-2.6 -2.1H8.6M-8.4 2.6H3.4" stroke="#0c1826" stroke-width="2.7" stroke-linecap="round" fill="none"/></g><g transform="translate(959.6 641.1)"><path d="M-7 -6.4V5H7.2" stroke="#2f363e" stroke-width="1.35" fill="none"/><path d="M-3.9 0.2V3.7M-1.3 -3V3.7M1.8 -0.4V3.7M4.9 -5.6V3.7" stroke="#2f363e" stroke-width="1.5" fill="none"/></g><g transform="translate(1020.7 641.1)"><rect x="-9.5" y="-5.7" width="19" height="4.4" rx="1" fill="#071220"/><rect x="-9.5" y="2.3" width="19" height="4.2" rx="1" fill="#071220"/></g><g transform="translate(1051.6 641.1)"><path d="M-7.2 4.6V-6.2Q-7.2 -7.4 -6 -7.4H2.2L7.4 -2.2V4.6" stroke="#5a5f65" stroke-width="1.3" fill="none"/><path d="M2 -7.2V-2H7.2" stroke="#5a5f65" stroke-width="1" fill="none"/><rect x="-10.3" y="4.2" width="19.2" height="4" fill="#0c1420"/><path d="M-9 6.9H8" stroke="#fff" stroke-width="1" stroke-dasharray="2.2 1.2"/></g><g transform="translate(1081.5 641.1)"><path d="M-7.3 -7.5H5.4L7.4 -5.5V7.4H-7.3Z" fill="#fff" stroke="#363c44" stroke-width="1.6"/><path d="M-5 -6.6H4V-1.8H-5Z" fill="#363c44"/><rect x="-0.2" y="-6.2" width="1.8" height="3.2" fill="#fff"/></g><g transform="translate(1111.4 641.1)"><path d="M-8.4 3.6L0.1 -3.9H4.2L-0.6 0.2L3 3.6Z" fill="#7f838c"/><path d="M2.6 -0.1L4.6 -2.7H7.2L9 -0.1L7.2 2.6H4.6Z" fill="#1e6fd0"/><path d="M1.2 -0.1L4.4 -1V0.9Z" fill="#fff"/></g><g transform="translate(1141.4 641.1)"><path d="M-3.8 6.6H-6.2Q-7.2 6.6 -7.2 5.6V-7.2Q-7.2 -8.2 -6.2 -8.2H1.6" stroke="#6e6e6e" stroke-width="1.2" fill="none"/><path d="M-3.6 -6.4H3.6L7.4 -2.6V8.4H-3.6Z" fill="#fff" stroke="#6e6e6e" stroke-width="1.3"/><path d="M3.4 -6.2V-2.4H7.2" stroke="#6e6e6e" stroke-width="1" fill="none"/></g><g transform="translate(1171.6 641.1)"><path d="M-6.4 -5.4H3.4V-2.6M-6.4 -5.4V4.6H-2" stroke="#6e6e6e" stroke-width="1.2" fill="none"/><path d="M-3.6 -6.6H0.8" stroke="#222" stroke-width="1.6"/><path d="M-2.2 -8.2H-0.6" stroke="#6e6e6e" stroke-width="1.2"/><rect x="-1.8" y="-2.9" width="9" height="10.4" fill="#fff" stroke="#6e6e6e" stroke-width="1.3"/><path d="M-0.2 -0.6H2.2" stroke="#333" stroke-width="1.2"/></g><g transform="translate(1201.6 641.1)"><path d="M2.6 -3.4L7.8 -7.6" stroke="#707070" stroke-width="2.6" stroke-linecap="round"/><path d="M-8 -2.2L2.2 -5.2L6.4 -0.2L-0.6 8Z" fill="#fff" stroke="#707070" stroke-width="1.4" stroke-linejoin="round"/><path d="M-5.4 1.8L4.4 -2.8M-3.2 5L5.6 -1.2" stroke="#707070" stroke-width="0.9"/></g><g transform="translate(1167.2 681)"><rect x="0.5" y="0.5" width="11" height="11" fill="#fff" stroke="#8e8f8f"/><rect x="2.2" y="2" width="7.8" height="7.8" fill="url(#bbg)" stroke="#0a2a6e" stroke-width="0.9"/></g><g transform="translate(1167.2 699)"><rect x="0.5" y="0.5" width="11" height="11" fill="#fff" stroke="#8e8f8f"/><rect x="2" y="2" width="8" height="8" fill="url(#cbg)"/></g><g transform="translate(1167.2 718)"><rect x="0.5" y="0.5" width="11" height="11" fill="#fff" stroke="#8e8f8f"/><rect x="2" y="2" width="8" height="8" fill="url(#cbg)"/></g><g transform="translate(1167.2 737)"><rect x="0.5" y="0.5" width="11" height="11" fill="#fff" stroke="#8e8f8f"/><rect x="2" y="2" width="8" height="8" fill="url(#cbg)"/><path d="M3.1 6.3L5.4 9.3L9.3 2.9" fill="none" stroke="#3a4c96" stroke-width="1.75"/></g><g transform="translate(1167.2 756)"><rect x="0.5" y="0.5" width="11" height="11" fill="#fff" stroke="#8e8f8f"/><rect x="2" y="2" width="8" height="8" fill="url(#cbg)"/></g><g transform="translate(1167.2 774)"><rect x="0.5" y="0.5" width="11" height="11" fill="#fff" stroke="#8e8f8f"/><rect x="2" y="2" width="8" height="8" fill="url(#cbg)"/><path d="M3.1 6.3L5.4 9.3L9.3 2.9" fill="none" stroke="#3a4c96" stroke-width="1.75"/></g><g transform="translate(1167.2 794)"><rect x="0.5" y="0.5" width="11" height="11" fill="#fff" stroke="#8e8f8f"/><rect x="2" y="2" width="8" height="8" fill="url(#cbg)"/><path d="M3.1 6.3L5.4 9.3L9.3 2.9" fill="none" stroke="#3a4c96" stroke-width="1.75"/></g><g transform="translate(1412.3 766.3)"><g transform="scale(0.92)"><path d="M-6 5.4L4.6 -5.2" stroke="#1d1d1d" stroke-width="6.4" fill="none"/><path d="M-5.4 4.8L3.4 -4" stroke="#fff" stroke-width="1.7" fill="none"/><path d="M5.2 -5.8L6.8 -7.4" stroke="#1d1d1d" stroke-width="5.6" stroke-linecap="round" fill="none"/><path d="M-9.2 8.6L-8.4 3.2L-3.8 7.6Z" fill="#1d1d1d"/></g></g><g transform="translate(1443 766.9)"><g transform="scale(0.95)"><path d="M-7.3 -7.5H5.4L7.4 -5.5V7.4H-7.3Z" fill="#fff" stroke="#8a8a8a" stroke-width="1.6"/><path d="M-5 -6.6H4V-1.8H-5Z" fill="#8a8a8a"/><rect x="-0.2" y="-6.2" width="1.8" height="3.2" fill="#fff"/></g></g><g transform="translate(1473.2 767.1)"><path d="M-7.4 -8.6H3.2L7.6 -4.2V8.8H-7.4Z" fill="#fff" stroke="#6c6c6c" stroke-width="1.3"/><path d="M3 -8.4V-4H7.4" stroke="#6c6c6c" stroke-width="1" fill="none"/><path d="M-3.6 -1.6L3.8 7M3.8 -1.6L-3.6 7" stroke="#333" stroke-width="2"/></g><g transform="translate(1503 766.9)"><path d="M-6 -8H1.8L6.2 -3.6V8H-6Z" fill="#fff" stroke="#8a8a8a" stroke-width="1.3"/><path d="M1.6 -7.8V-3.4H6" stroke="#8a8a8a" stroke-width="1" fill="none"/></g><g transform="translate(1533.3 766.9)"><path d="M-6.6 -6H2.4V-2M-6.6 -6V3H-2.4" stroke="#8a8a8a" stroke-width="1.2" fill="none"/><rect x="-2.2" y="-2" width="8.6" height="9" fill="#fff" stroke="#8a8a8a" stroke-width="1.2"/></g><g transform="translate(1564.4 766.9)"><path d="M-3 -3.4H2.4A3.9 3.9 0 0 1 2.4 4.4" stroke="#8a8a8a" stroke-width="1.4" fill="none"/><path d="M-1.6 -7.4L-6.8 -3.4L-1.6 0.4Z" fill="#8a8a8a"/></g><g transform="translate(1657.3 766.3)"><path d="M-9 0H9" stroke="#2a2a2a" stroke-width="2.2" stroke-dasharray="2.1 0.9"/></g><g transform="translate(1690.5 765.9)"><path d="M-7.2 4.6V-6.2Q-7.2 -7.4 -6 -7.4H2.2L7.4 -2.2V4.6" stroke="#333" stroke-width="1.3" fill="none"/><path d="M2 -7.2V-2H7.2" stroke="#333" stroke-width="1" fill="none"/><rect x="-10.3" y="4.2" width="19.2" height="4" fill="#0c1420"/><path d="M-9 6.9H8" stroke="#fff" stroke-width="1" stroke-dasharray="2.2 1.2"/></g></svg>
<svg style="left:0px;top:0px;pointer-events:none;" width="1686" height="853" viewBox="0 0 1686 853"><defs><filter id="sh" x="-10%" y="-10%" width="125%" height="130%"><feGaussianBlur in="SourceAlpha" stdDeviation="1.6"/><feOffset dx="2.2" dy="2.2" result="o"/><feComponentTransfer><feFuncA type="linear" slope="0.45"/></feComponentTransfer><feMerge><feMergeNode/><feMergeNode in="SourceGraphic"/></feMerge></filter></defs><g filter="url(#sh)"><ellipse cx="1372.5" cy="372.3" rx="71.8" ry="53.4" fill="none" stroke="#861010" stroke-width="3.8" transform="rotate(-2 1372.5 372.3)"/><ellipse cx="1492" cy="797" rx="130.4" ry="39.2" fill="none" stroke="#861010" stroke-width="4.2" transform="rotate(1.2 1492 797)"/><path d="M1073.5 329.6 L1293 363.6" stroke="#861010" stroke-width="1.55" fill="none"/><path d="M1301.5 365 L1287.6 367.6 L1289 359 Z" fill="#861010"/><path d="M1376 427 L1465 750" stroke="#861010" stroke-width="1.55" fill="none"/><path d="M1467.6 759.6 L1459.6 748.6 L1468.4 746.2 Z" fill="#861010"/></g></svg>
</div></body></html>
